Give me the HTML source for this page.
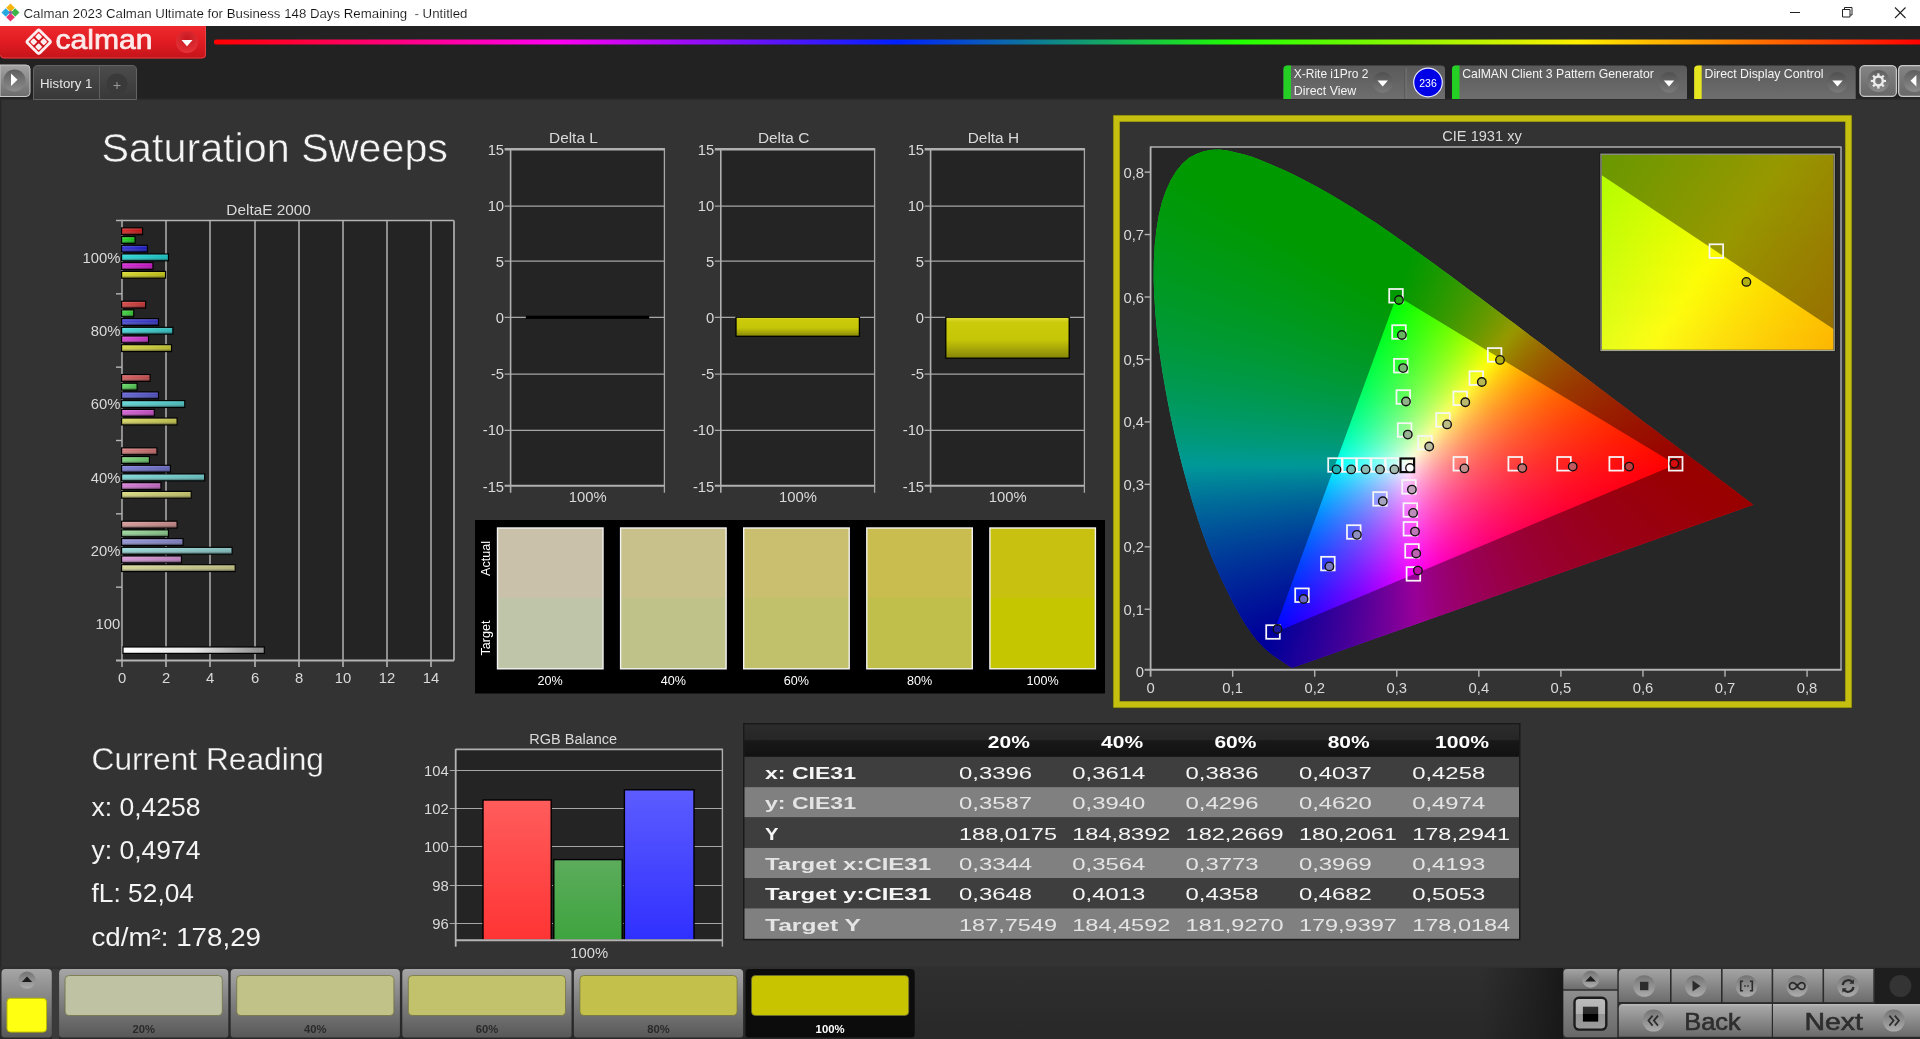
<!DOCTYPE html>
<html><head><meta charset="utf-8"><title>Calman 2023 - Saturation Sweeps</title>
<style>html,body{margin:0;padding:0;background:#333;overflow:hidden}svg{display:block;will-change:transform}text{font-family:"Liberation Sans",sans-serif;white-space:pre}</style>
</head><body>
<svg width="1920" height="1039" viewBox="0 0 1920 1039">
<defs><linearGradient id="rb" gradientUnits="userSpaceOnUse" x1="214" x2="1920" y1="0" y2="0"><stop offset="0" stop-color="#f00"/><stop offset="0.2" stop-color="#ff00f0"/><stop offset="0.4" stop-color="#0020ff"/><stop offset="0.6" stop-color="#20ff00"/><stop offset="0.8" stop-color="#ffee00"/><stop offset="1" stop-color="#f00"/></linearGradient><linearGradient id="redb" x1="0" x2="0" y1="0" y2="1"><stop offset="0" stop-color="#ee2a2e"/><stop offset="0.5" stop-color="#e01c22"/><stop offset="1" stop-color="#c4141a"/></linearGradient><radialGradient id="rdd" cx="0.5" cy="0.35" r="0.7"><stop offset="0" stop-color="#c81820"/><stop offset="1" stop-color="#e8343a"/></radialGradient><linearGradient id="pb" x1="0" x2="0" y1="0" y2="1"><stop offset="0" stop-color="#a4a4a4"/><stop offset="1" stop-color="#6c6c6c"/></linearGradient><linearGradient id="pc" x1="0" x2="0" y1="0" y2="1"><stop offset="0" stop-color="#5e5e5e"/><stop offset="1" stop-color="#8c8c8c"/></linearGradient><linearGradient id="ht" x1="0" x2="0" y1="0" y2="1"><stop offset="0" stop-color="#4c4c4c"/><stop offset="1" stop-color="#383838"/></linearGradient><linearGradient id="db" x1="0" x2="0" y1="0" y2="1"><stop offset="0" stop-color="#5a5a5a"/><stop offset="1" stop-color="#6e6e6e"/></linearGradient><linearGradient id="dc" x1="0" x2="0" y1="0" y2="1"><stop offset="0" stop-color="#505050"/><stop offset="1" stop-color="#7a7a7a"/></linearGradient><linearGradient id="gb" x1="0" x2="0" y1="0" y2="1"><stop offset="0" stop-color="#848484"/><stop offset="1" stop-color="#686868"/></linearGradient><linearGradient id="bh" x1="0" x2="0" y1="0" y2="1"><stop offset="0" stop-color="#fff" stop-opacity="0.22"/><stop offset="0.4" stop-color="#fff" stop-opacity="0"/><stop offset="1" stop-color="#000" stop-opacity="0.5"/></linearGradient><linearGradient id="bw" x1="0" x2="1" y1="0" y2="0"><stop offset="0" stop-color="#fff" stop-opacity="0.10"/><stop offset="1" stop-color="#000" stop-opacity="0.12"/></linearGradient><linearGradient id="wb" x1="0" x2="1" y1="0" y2="0"><stop offset="0" stop-color="#fff"/><stop offset="0.5" stop-color="#e8e8e8"/><stop offset="1" stop-color="#8c8c8c"/></linearGradient><linearGradient id="yb" x1="0" x2="0" y1="0" y2="1"><stop offset="0" stop-color="#e0e040"/><stop offset="0.12" stop-color="#cbcb0c"/><stop offset="0.55" stop-color="#c6c608"/><stop offset="1" stop-color="#86860a"/></linearGradient><linearGradient id="cf0" gradientUnits="userSpaceOnUse" x1="1150" x2="1760" y1="0" y2="0"><stop offset="0.2295" stop-color="#00ff00"/><stop offset="0.2443" stop-color="#00ff00"/></linearGradient><linearGradient id="cf1" gradientUnits="userSpaceOnUse" x1="1150" x2="1760" y1="0" y2="0"><stop offset="0.0670" stop-color="#00ff00"/><stop offset="0.1556" stop-color="#00ff00"/></linearGradient><linearGradient id="cf2" gradientUnits="userSpaceOnUse" x1="1150" x2="1760" y1="0" y2="0"><stop offset="0.0487" stop-color="#00ff00"/><stop offset="0.1864" stop-color="#00ff00"/></linearGradient><linearGradient id="cf3" gradientUnits="userSpaceOnUse" x1="1150" x2="1760" y1="0" y2="0"><stop offset="0.0381" stop-color="#00ff01"/><stop offset="0.2102" stop-color="#00ff00"/></linearGradient><linearGradient id="cf4" gradientUnits="userSpaceOnUse" x1="1150" x2="1760" y1="0" y2="0"><stop offset="0.0301" stop-color="#00ff05"/><stop offset="0.0646" stop-color="#00ff00"/><stop offset="0.2318" stop-color="#00ff00"/></linearGradient><linearGradient id="cf5" gradientUnits="userSpaceOnUse" x1="1150" x2="1760" y1="0" y2="0"><stop offset="0.0241" stop-color="#00ff07"/><stop offset="0.0831" stop-color="#00ff00"/><stop offset="0.2552" stop-color="#00ff00"/></linearGradient><linearGradient id="cf6" gradientUnits="userSpaceOnUse" x1="1150" x2="1760" y1="0" y2="0"><stop offset="0.0188" stop-color="#00ff0a"/><stop offset="0.0975" stop-color="#00ff00"/><stop offset="0.2746" stop-color="#00ff00"/></linearGradient><linearGradient id="cf7" gradientUnits="userSpaceOnUse" x1="1150" x2="1760" y1="0" y2="0"><stop offset="0.0142" stop-color="#00ff0d"/><stop offset="0.1126" stop-color="#00ff00"/><stop offset="0.2896" stop-color="#00ff00"/></linearGradient><linearGradient id="cf8" gradientUnits="userSpaceOnUse" x1="1150" x2="1760" y1="0" y2="0"><stop offset="0.0105" stop-color="#00ff10"/><stop offset="0.1286" stop-color="#00ff00"/><stop offset="0.3105" stop-color="#00ff00"/></linearGradient><linearGradient id="cf9" gradientUnits="userSpaceOnUse" x1="1150" x2="1760" y1="0" y2="0"><stop offset="0.0071" stop-color="#00ff13"/><stop offset="0.1448" stop-color="#00ff00"/><stop offset="0.3268" stop-color="#00ff00"/></linearGradient><linearGradient id="cf10" gradientUnits="userSpaceOnUse" x1="1150" x2="1760" y1="0" y2="0"><stop offset="0.0046" stop-color="#00ff16"/><stop offset="0.1619" stop-color="#00ff00"/><stop offset="0.3390" stop-color="#00ff00"/></linearGradient><linearGradient id="cf11" gradientUnits="userSpaceOnUse" x1="1150" x2="1760" y1="0" y2="0"><stop offset="0.0022" stop-color="#00ff18"/><stop offset="0.1792" stop-color="#00ff00"/><stop offset="0.3563" stop-color="#00ff00"/></linearGradient><linearGradient id="cf12" gradientUnits="userSpaceOnUse" x1="1150" x2="1760" y1="0" y2="0"><stop offset="0.0003" stop-color="#00ff1b"/><stop offset="0.1970" stop-color="#00ff00"/><stop offset="0.3691" stop-color="#00ff00"/></linearGradient><linearGradient id="cf13" gradientUnits="userSpaceOnUse" x1="1150" x2="1760" y1="0" y2="0"><stop offset="-0.0014" stop-color="#00ff1e"/><stop offset="0.2101" stop-color="#00ff00"/><stop offset="0.3872" stop-color="#00ff00"/></linearGradient><linearGradient id="cf14" gradientUnits="userSpaceOnUse" x1="1150" x2="1760" y1="0" y2="0"><stop offset="-0.0029" stop-color="#00ff21"/><stop offset="0.2283" stop-color="#00ff00"/><stop offset="0.4004" stop-color="#00ff00"/></linearGradient><linearGradient id="cf15" gradientUnits="userSpaceOnUse" x1="1150" x2="1760" y1="0" y2="0"><stop offset="-0.0039" stop-color="#00ff24"/><stop offset="0.2469" stop-color="#00ff00"/><stop offset="0.4141" stop-color="#00ff00"/></linearGradient><linearGradient id="cf16" gradientUnits="userSpaceOnUse" x1="1150" x2="1760" y1="0" y2="0"><stop offset="-0.0050" stop-color="#00ff27"/><stop offset="0.2606" stop-color="#00ff00"/><stop offset="0.4278" stop-color="#00ff00"/></linearGradient><linearGradient id="cf17" gradientUnits="userSpaceOnUse" x1="1150" x2="1760" y1="0" y2="0"><stop offset="-0.0057" stop-color="#00ff2a"/><stop offset="0.2795" stop-color="#00ff00"/><stop offset="0.4320" stop-color="#00ff00"/><stop offset="0.4418" stop-color="#07ff00"/></linearGradient><linearGradient id="cf18" gradientUnits="userSpaceOnUse" x1="1150" x2="1760" y1="0" y2="0"><stop offset="-0.0063" stop-color="#00ff2d"/><stop offset="0.1511" stop-color="#00ff18"/><stop offset="0.2937" stop-color="#00ff00"/><stop offset="0.4265" stop-color="#00ff00"/><stop offset="0.4560" stop-color="#15ff00"/></linearGradient><linearGradient id="cf19" gradientUnits="userSpaceOnUse" x1="1150" x2="1760" y1="0" y2="0"><stop offset="-0.0068" stop-color="#00ff30"/><stop offset="0.1653" stop-color="#00ff19"/><stop offset="0.3079" stop-color="#00ff00"/><stop offset="0.4260" stop-color="#00ff00"/><stop offset="0.4702" stop-color="#24ff00"/></linearGradient><linearGradient id="cf20" gradientUnits="userSpaceOnUse" x1="1150" x2="1760" y1="0" y2="0"><stop offset="-0.0070" stop-color="#00ff33"/><stop offset="0.1258" stop-color="#00ff22"/><stop offset="0.3275" stop-color="#00ff00"/><stop offset="0.4209" stop-color="#00ff00"/><stop offset="0.4848" stop-color="#34ff00"/></linearGradient><linearGradient id="cf21" gradientUnits="userSpaceOnUse" x1="1150" x2="1760" y1="0" y2="0"><stop offset="-0.0071" stop-color="#00ff37"/><stop offset="0.1749" stop-color="#00ff1e"/><stop offset="0.3421" stop-color="#00ff00"/><stop offset="0.4159" stop-color="#00ff00"/><stop offset="0.4602" stop-color="#22ff00"/><stop offset="0.4946" stop-color="#41ff00"/></linearGradient><linearGradient id="cf22" gradientUnits="userSpaceOnUse" x1="1150" x2="1760" y1="0" y2="0"><stop offset="-0.0071" stop-color="#00ff3a"/><stop offset="0.1896" stop-color="#00ff1f"/><stop offset="0.3568" stop-color="#00ff00"/><stop offset="0.4109" stop-color="#00ff00"/><stop offset="0.4158" stop-color="#01ff00"/><stop offset="0.4453" stop-color="#19ff00"/><stop offset="0.5093" stop-color="#53ff00"/></linearGradient><linearGradient id="cf23" gradientUnits="userSpaceOnUse" x1="1150" x2="1760" y1="0" y2="0"><stop offset="-0.0068" stop-color="#00ff3d"/><stop offset="0.1998" stop-color="#00ff21"/><stop offset="0.3768" stop-color="#00ff00"/><stop offset="0.4113" stop-color="#00ff00"/><stop offset="0.4604" stop-color="#2aff00"/><stop offset="0.5244" stop-color="#67ff00"/></linearGradient><linearGradient id="cf24" gradientUnits="userSpaceOnUse" x1="1150" x2="1760" y1="0" y2="0"><stop offset="-0.0064" stop-color="#00ff41"/><stop offset="0.1657" stop-color="#00ff2a"/><stop offset="0.3919" stop-color="#00ff00"/><stop offset="0.4067" stop-color="#00ff00"/><stop offset="0.4755" stop-color="#3cff00"/><stop offset="0.5345" stop-color="#77ff00"/></linearGradient><linearGradient id="cf25" gradientUnits="userSpaceOnUse" x1="1150" x2="1760" y1="0" y2="0"><stop offset="-0.0061" stop-color="#00ff45"/><stop offset="0.2201" stop-color="#00ff25"/><stop offset="0.4021" stop-color="#00ff01"/><stop offset="0.4759" stop-color="#41ff00"/><stop offset="0.5496" stop-color="#8eff00"/></linearGradient><linearGradient id="cf26" gradientUnits="userSpaceOnUse" x1="1150" x2="1760" y1="0" y2="0"><stop offset="-0.0054" stop-color="#00ff48"/><stop offset="0.2257" stop-color="#00ff28"/><stop offset="0.3979" stop-color="#00ff06"/><stop offset="0.4224" stop-color="#14ff00"/><stop offset="0.4618" stop-color="#38ff00"/><stop offset="0.5257" stop-color="#7aff00"/><stop offset="0.5651" stop-color="#a8ff00"/></linearGradient><linearGradient id="cf27" gradientUnits="userSpaceOnUse" x1="1150" x2="1760" y1="0" y2="0"><stop offset="-0.0048" stop-color="#00ff4c"/><stop offset="0.2018" stop-color="#00ff30"/><stop offset="0.3936" stop-color="#00ff0b"/><stop offset="0.4084" stop-color="#0aff08"/><stop offset="0.4428" stop-color="#2aff00"/><stop offset="0.4969" stop-color="#61ff00"/><stop offset="0.5756" stop-color="#bdff00"/></linearGradient><linearGradient id="cf28" gradientUnits="userSpaceOnUse" x1="1150" x2="1760" y1="0" y2="0"><stop offset="-0.0041" stop-color="#00ff50"/><stop offset="0.2271" stop-color="#00ff30"/><stop offset="0.3943" stop-color="#01ff0f"/><stop offset="0.4582" stop-color="#3eff00"/><stop offset="0.5025" stop-color="#6dff00"/><stop offset="0.5566" stop-color="#adff00"/><stop offset="0.5910" stop-color="#daff00"/></linearGradient><linearGradient id="cf29" gradientUnits="userSpaceOnUse" x1="1150" x2="1760" y1="0" y2="0"><stop offset="-0.0032" stop-color="#00ff54"/><stop offset="0.1985" stop-color="#00ff39"/><stop offset="0.3903" stop-color="#01ff14"/><stop offset="0.4739" stop-color="#54ff00"/><stop offset="0.4985" stop-color="#6fff00"/><stop offset="0.5427" stop-color="#a4ff00"/><stop offset="0.6018" stop-color="#f4ff00"/></linearGradient><linearGradient id="cf30" gradientUnits="userSpaceOnUse" x1="1150" x2="1760" y1="0" y2="0"><stop offset="-0.0022" stop-color="#00ff59"/><stop offset="0.1896" stop-color="#00ff3f"/><stop offset="0.3863" stop-color="#00ff1a"/><stop offset="0.4551" stop-color="#45ff09"/><stop offset="0.4945" stop-color="#71ff00"/><stop offset="0.5338" stop-color="#a1ff00"/><stop offset="0.5978" stop-color="#f9ff00"/><stop offset="0.6027" stop-color="#fffd00"/><stop offset="0.6174" stop-color="#ffe900"/></linearGradient><linearGradient id="cf31" gradientUnits="userSpaceOnUse" x1="1150" x2="1760" y1="0" y2="0"><stop offset="-0.0013" stop-color="#00ff5d"/><stop offset="0.2003" stop-color="#00ff42"/><stop offset="0.3823" stop-color="#00ff1f"/><stop offset="0.4364" stop-color="#36ff13"/><stop offset="0.4905" stop-color="#73ff04"/><stop offset="0.5053" stop-color="#85ff00"/><stop offset="0.5446" stop-color="#b8ff00"/><stop offset="0.5938" stop-color="#ffff00"/><stop offset="0.6282" stop-color="#ffd100"/></linearGradient><linearGradient id="cf32" gradientUnits="userSpaceOnUse" x1="1150" x2="1760" y1="0" y2="0"><stop offset="-0.0001" stop-color="#00ff61"/><stop offset="0.2064" stop-color="#00ff46"/><stop offset="0.3785" stop-color="#00ff25"/><stop offset="0.4326" stop-color="#37ff18"/><stop offset="0.5064" stop-color="#8eff05"/><stop offset="0.5212" stop-color="#a2ff00"/><stop offset="0.5851" stop-color="#feff00"/><stop offset="0.6146" stop-color="#ffd700"/><stop offset="0.6392" stop-color="#ffbd00"/></linearGradient><linearGradient id="cf33" gradientUnits="userSpaceOnUse" x1="1150" x2="1760" y1="0" y2="0"><stop offset="0.0011" stop-color="#00ff66"/><stop offset="0.1879" stop-color="#00ff4e"/><stop offset="0.3748" stop-color="#00ff2b"/><stop offset="0.4289" stop-color="#38ff1f"/><stop offset="0.4830" stop-color="#78ff10"/><stop offset="0.5371" stop-color="#c1ff00"/><stop offset="0.5765" stop-color="#fdff00"/><stop offset="0.6158" stop-color="#ffcc00"/><stop offset="0.6552" stop-color="#ffa600"/></linearGradient><linearGradient id="cf34" gradientUnits="userSpaceOnUse" x1="1150" x2="1760" y1="0" y2="0"><stop offset="0.0023" stop-color="#00ff6b"/><stop offset="0.2088" stop-color="#00ff50"/><stop offset="0.3711" stop-color="#00ff32"/><stop offset="0.4006" stop-color="#1eff2b"/><stop offset="0.4646" stop-color="#68ff1b"/><stop offset="0.4990" stop-color="#95ff11"/><stop offset="0.5531" stop-color="#e4ff00"/><stop offset="0.5678" stop-color="#fbff00"/><stop offset="0.5728" stop-color="#fffb00"/><stop offset="0.5924" stop-color="#ffde00"/><stop offset="0.6170" stop-color="#ffc100"/><stop offset="0.6662" stop-color="#ff9500"/></linearGradient><linearGradient id="cf35" gradientUnits="userSpaceOnUse" x1="1150" x2="1760" y1="0" y2="0"><stop offset="0.0036" stop-color="#00ff70"/><stop offset="0.2249" stop-color="#00ff53"/><stop offset="0.3676" stop-color="#00ff38"/><stop offset="0.4168" stop-color="#35ff2d"/><stop offset="0.4659" stop-color="#71ff20"/><stop offset="0.5200" stop-color="#bcff11"/><stop offset="0.5594" stop-color="#faff04"/><stop offset="0.5643" stop-color="#fffc02"/><stop offset="0.5790" stop-color="#ffe500"/><stop offset="0.6036" stop-color="#ffc600"/><stop offset="0.6381" stop-color="#ffa400"/><stop offset="0.6823" stop-color="#ff8300"/></linearGradient><linearGradient id="cf36" gradientUnits="userSpaceOnUse" x1="1150" x2="1760" y1="0" y2="0"><stop offset="0.0051" stop-color="#00ff75"/><stop offset="0.1920" stop-color="#00ff5e"/><stop offset="0.3641" stop-color="#00ff3f"/><stop offset="0.4232" stop-color="#42ff31"/><stop offset="0.4625" stop-color="#74ff27"/><stop offset="0.4969" stop-color="#a4ff1e"/><stop offset="0.5559" stop-color="#fffd0b"/><stop offset="0.5854" stop-color="#ffd200"/><stop offset="0.6199" stop-color="#ffac00"/><stop offset="0.6494" stop-color="#ff9300"/><stop offset="0.6936" stop-color="#ff7600"/></linearGradient><linearGradient id="cf37" gradientUnits="userSpaceOnUse" x1="1150" x2="1760" y1="0" y2="0"><stop offset="0.0066" stop-color="#00ff7b"/><stop offset="0.1787" stop-color="#00ff66"/><stop offset="0.3607" stop-color="#00ff46"/><stop offset="0.4000" stop-color="#2cff3d"/><stop offset="0.4640" stop-color="#7eff2e"/><stop offset="0.4984" stop-color="#b0ff24"/><stop offset="0.5476" stop-color="#fffe14"/><stop offset="0.5820" stop-color="#ffcb06"/><stop offset="0.6115" stop-color="#ffab00"/><stop offset="0.6558" stop-color="#ff8700"/><stop offset="0.7050" stop-color="#ff6a00"/></linearGradient><linearGradient id="cf38" gradientUnits="userSpaceOnUse" x1="1150" x2="1760" y1="0" y2="0"><stop offset="0.0081" stop-color="#00ff80"/><stop offset="0.1803" stop-color="#00ff6c"/><stop offset="0.3573" stop-color="#00ff4e"/><stop offset="0.4163" stop-color="#46ff41"/><stop offset="0.4458" stop-color="#6dff39"/><stop offset="0.4999" stop-color="#bdff2a"/><stop offset="0.5393" stop-color="#fffe1e"/><stop offset="0.5688" stop-color="#ffd110"/><stop offset="0.6131" stop-color="#ffa102"/><stop offset="0.6573" stop-color="#ff7f00"/><stop offset="0.7213" stop-color="#ff5d00"/></linearGradient><linearGradient id="cf39" gradientUnits="userSpaceOnUse" x1="1150" x2="1760" y1="0" y2="0"><stop offset="0.0098" stop-color="#00ff86"/><stop offset="0.1918" stop-color="#00ff71"/><stop offset="0.3541" stop-color="#01ff55"/><stop offset="0.4082" stop-color="#42ff4a"/><stop offset="0.4623" stop-color="#8dff3c"/><stop offset="0.4967" stop-color="#c3ff33"/><stop offset="0.5312" stop-color="#ffff28"/><stop offset="0.5656" stop-color="#ffca17"/><stop offset="0.6098" stop-color="#ff9b07"/><stop offset="0.6344" stop-color="#ff8800"/><stop offset="0.6689" stop-color="#ff7100"/><stop offset="0.7328" stop-color="#ff5300"/></linearGradient><linearGradient id="cf40" gradientUnits="userSpaceOnUse" x1="1150" x2="1760" y1="0" y2="0"><stop offset="0.0116" stop-color="#00ff8c"/><stop offset="0.2132" stop-color="#00ff75"/><stop offset="0.3509" stop-color="#01ff5d"/><stop offset="0.3952" stop-color="#37ff54"/><stop offset="0.4394" stop-color="#74ff4a"/><stop offset="0.4837" stop-color="#b9ff3e"/><stop offset="0.5230" stop-color="#ffff33"/><stop offset="0.5427" stop-color="#ffde27"/><stop offset="0.5624" stop-color="#ffc31d"/><stop offset="0.6017" stop-color="#ff9a0e"/><stop offset="0.6509" stop-color="#ff7600"/><stop offset="0.7001" stop-color="#ff5b00"/><stop offset="0.7443" stop-color="#ff4900"/></linearGradient><linearGradient id="cf41" gradientUnits="userSpaceOnUse" x1="1150" x2="1760" y1="0" y2="0"><stop offset="0.0133" stop-color="#00ff93"/><stop offset="0.1706" stop-color="#00ff82"/><stop offset="0.3477" stop-color="#02ff66"/><stop offset="0.3919" stop-color="#39ff5d"/><stop offset="0.4362" stop-color="#78ff53"/><stop offset="0.4756" stop-color="#b7ff49"/><stop offset="0.5149" stop-color="#feff3e"/><stop offset="0.5346" stop-color="#ffde30"/><stop offset="0.5592" stop-color="#ffbc23"/><stop offset="0.5887" stop-color="#ff9d16"/><stop offset="0.6133" stop-color="#ff880e"/><stop offset="0.6674" stop-color="#ff6600"/><stop offset="0.6969" stop-color="#ff5700"/><stop offset="0.7559" stop-color="#ff4100"/></linearGradient><linearGradient id="cf42" gradientUnits="userSpaceOnUse" x1="1150" x2="1760" y1="0" y2="0"><stop offset="0.0151" stop-color="#00ff99"/><stop offset="0.1824" stop-color="#00ff88"/><stop offset="0.3446" stop-color="#02ff6f"/><stop offset="0.3791" stop-color="#2eff68"/><stop offset="0.4233" stop-color="#6dff5f"/><stop offset="0.4774" stop-color="#c6ff52"/><stop offset="0.5069" stop-color="#feff49"/><stop offset="0.5315" stop-color="#ffd637"/><stop offset="0.5512" stop-color="#ffbb2c"/><stop offset="0.6004" stop-color="#ff8a16"/><stop offset="0.6545" stop-color="#ff6607"/><stop offset="0.6840" stop-color="#ff5800"/><stop offset="0.7725" stop-color="#ff3700"/></linearGradient><linearGradient id="cf43" gradientUnits="userSpaceOnUse" x1="1150" x2="1760" y1="0" y2="0"><stop offset="0.0170" stop-color="#00ffa0"/><stop offset="0.1744" stop-color="#00ff91"/><stop offset="0.3367" stop-color="#00ff79"/><stop offset="0.3416" stop-color="#03ff79"/><stop offset="0.3613" stop-color="#1cff75"/><stop offset="0.4105" stop-color="#62ff6b"/><stop offset="0.4547" stop-color="#aaff61"/><stop offset="0.4990" stop-color="#fdff56"/><stop offset="0.5236" stop-color="#ffd542"/><stop offset="0.5531" stop-color="#ffae2f"/><stop offset="0.5777" stop-color="#ff9523"/><stop offset="0.6072" stop-color="#ff7d18"/><stop offset="0.6465" stop-color="#ff640c"/><stop offset="0.7006" stop-color="#ff4b00"/><stop offset="0.7842" stop-color="#ff3000"/></linearGradient><linearGradient id="cf44" gradientUnits="userSpaceOnUse" x1="1150" x2="1760" y1="0" y2="0"><stop offset="0.0189" stop-color="#00ffa8"/><stop offset="0.2206" stop-color="#00ff94"/><stop offset="0.3337" stop-color="#00ff83"/><stop offset="0.3533" stop-color="#17ff80"/><stop offset="0.4074" stop-color="#66ff76"/><stop offset="0.4419" stop-color="#9fff6f"/><stop offset="0.4911" stop-color="#fdff62"/><stop offset="0.5206" stop-color="#ffcd49"/><stop offset="0.5501" stop-color="#ffa735"/><stop offset="0.5697" stop-color="#ff932b"/><stop offset="0.6091" stop-color="#ff741b"/><stop offset="0.6681" stop-color="#ff530a"/><stop offset="0.7173" stop-color="#ff4000"/><stop offset="0.7960" stop-color="#ff2900"/></linearGradient><linearGradient id="cf45" gradientUnits="userSpaceOnUse" x1="1150" x2="1760" y1="0" y2="0"><stop offset="0.0210" stop-color="#00ffaf"/><stop offset="0.2128" stop-color="#00ff9e"/><stop offset="0.3308" stop-color="#00ff8e"/><stop offset="0.3751" stop-color="#3cff87"/><stop offset="0.4193" stop-color="#83ff7e"/><stop offset="0.4488" stop-color="#b8ff78"/><stop offset="0.4833" stop-color="#fdff70"/><stop offset="0.5078" stop-color="#ffd358"/><stop offset="0.5374" stop-color="#ffab41"/><stop offset="0.5619" stop-color="#ff9133"/><stop offset="0.6013" stop-color="#ff7221"/><stop offset="0.6456" stop-color="#ff5813"/><stop offset="0.7193" stop-color="#ff3a02"/><stop offset="0.8078" stop-color="#ff2300"/></linearGradient><linearGradient id="cf46" gradientUnits="userSpaceOnUse" x1="1150" x2="1760" y1="0" y2="0"><stop offset="0.0231" stop-color="#00ffb7"/><stop offset="0.1903" stop-color="#00ffaa"/><stop offset="0.3280" stop-color="#00ff99"/><stop offset="0.3723" stop-color="#3fff92"/><stop offset="0.4018" stop-color="#6fff8d"/><stop offset="0.4411" stop-color="#b6ff86"/><stop offset="0.4755" stop-color="#fdff7e"/><stop offset="0.5050" stop-color="#ffca5f"/><stop offset="0.5296" stop-color="#ffa94b"/><stop offset="0.5641" stop-color="#ff8636"/><stop offset="0.6034" stop-color="#ff6924"/><stop offset="0.6723" stop-color="#ff460f"/><stop offset="0.7411" stop-color="#ff2f01"/><stop offset="0.8247" stop-color="#ff1c00"/></linearGradient><linearGradient id="cf47" gradientUnits="userSpaceOnUse" x1="1150" x2="1760" y1="0" y2="0"><stop offset="0.0252" stop-color="#00ffc0"/><stop offset="0.1776" stop-color="#00ffb5"/><stop offset="0.3252" stop-color="#00ffa5"/><stop offset="0.3596" stop-color="#33ffa0"/><stop offset="0.3989" stop-color="#74ff9a"/><stop offset="0.4383" stop-color="#beff93"/><stop offset="0.4678" stop-color="#fdff8d"/><stop offset="0.4875" stop-color="#ffd975"/><stop offset="0.5170" stop-color="#ffad58"/><stop offset="0.5465" stop-color="#ff8d44"/><stop offset="0.5858" stop-color="#ff6d2f"/><stop offset="0.6350" stop-color="#ff511d"/><stop offset="0.6793" stop-color="#ff3e11"/><stop offset="0.7629" stop-color="#ff2500"/><stop offset="0.8367" stop-color="#ff1600"/></linearGradient><linearGradient id="cf48" gradientUnits="userSpaceOnUse" x1="1150" x2="1760" y1="0" y2="0"><stop offset="0.0274" stop-color="#00ffc9"/><stop offset="0.1848" stop-color="#00ffbf"/><stop offset="0.3225" stop-color="#02ffb1"/><stop offset="0.3520" stop-color="#2effae"/><stop offset="0.3864" stop-color="#68ffa9"/><stop offset="0.4159" stop-color="#9fffa5"/><stop offset="0.4602" stop-color="#feff9d"/><stop offset="0.4848" stop-color="#ffcf7c"/><stop offset="0.5192" stop-color="#ff9f5b"/><stop offset="0.5438" stop-color="#ff8649"/><stop offset="0.5881" stop-color="#ff6432"/><stop offset="0.6323" stop-color="#ff4c21"/><stop offset="0.7208" stop-color="#ff2c0a"/><stop offset="0.7799" stop-color="#ff1e00"/><stop offset="0.8487" stop-color="#ff1100"/></linearGradient><linearGradient id="cf49" gradientUnits="userSpaceOnUse" x1="1150" x2="1760" y1="0" y2="0"><stop offset="0.0297" stop-color="#00ffd2"/><stop offset="0.3150" stop-color="#00ffbf"/><stop offset="0.3199" stop-color="#03ffbf"/><stop offset="0.3297" stop-color="#12ffbe"/><stop offset="0.3642" stop-color="#4affba"/><stop offset="0.3937" stop-color="#80ffb7"/><stop offset="0.4183" stop-color="#b1ffb3"/><stop offset="0.4527" stop-color="#feffae"/><stop offset="0.4822" stop-color="#ffc583"/><stop offset="0.5166" stop-color="#ff9761"/><stop offset="0.5609" stop-color="#ff6f43"/><stop offset="0.6002" stop-color="#ff5630"/><stop offset="0.6789" stop-color="#ff3417"/><stop offset="0.7576" stop-color="#ff1f06"/><stop offset="0.7970" stop-color="#ff1700"/><stop offset="0.8609" stop-color="#ff0c00"/></linearGradient><linearGradient id="cf50" gradientUnits="userSpaceOnUse" x1="1150" x2="1760" y1="0" y2="0"><stop offset="0.0321" stop-color="#00ffdc"/><stop offset="0.3124" stop-color="#00ffcd"/><stop offset="0.3370" stop-color="#24ffcb"/><stop offset="0.3763" stop-color="#6affc8"/><stop offset="0.4157" stop-color="#baffc4"/><stop offset="0.4452" stop-color="#ffffc0"/><stop offset="0.4550" stop-color="#ffe8ae"/><stop offset="0.4747" stop-color="#ffc391"/><stop offset="0.5042" stop-color="#ff9a6f"/><stop offset="0.5239" stop-color="#ff855f"/><stop offset="0.5534" stop-color="#ff6c4b"/><stop offset="0.5927" stop-color="#ff5336"/><stop offset="0.6616" stop-color="#ff351e"/><stop offset="0.7599" stop-color="#ff1a08"/><stop offset="0.8140" stop-color="#ff1000"/><stop offset="0.8731" stop-color="#ff0700"/></linearGradient><linearGradient id="cf51" gradientUnits="userSpaceOnUse" x1="1150" x2="1760" y1="0" y2="0"><stop offset="0.0345" stop-color="#00ffe7"/><stop offset="0.3099" stop-color="#00ffdd"/><stop offset="0.3394" stop-color="#30ffdb"/><stop offset="0.3738" stop-color="#70ffd9"/><stop offset="0.3984" stop-color="#a3ffd7"/><stop offset="0.4378" stop-color="#fffed3"/><stop offset="0.4525" stop-color="#ffdcb6"/><stop offset="0.4673" stop-color="#ffc19e"/><stop offset="0.5017" stop-color="#ff9276"/><stop offset="0.5410" stop-color="#ff6d56"/><stop offset="0.5804" stop-color="#ff533f"/><stop offset="0.6492" stop-color="#ff3425"/><stop offset="0.6935" stop-color="#ff2618"/><stop offset="0.8214" stop-color="#ff0c01"/><stop offset="0.8902" stop-color="#ff0200"/></linearGradient><linearGradient id="cf52" gradientUnits="userSpaceOnUse" x1="1150" x2="1760" y1="0" y2="0"><stop offset="0.0370" stop-color="#00fff2"/><stop offset="0.3075" stop-color="#01ffed"/><stop offset="0.3468" stop-color="#46ffec"/><stop offset="0.3764" stop-color="#81ffeb"/><stop offset="0.4009" stop-color="#b8ffea"/><stop offset="0.4255" stop-color="#f5ffe9"/><stop offset="0.4304" stop-color="#fffce6"/><stop offset="0.4452" stop-color="#ffdac6"/><stop offset="0.4649" stop-color="#ffb6a5"/><stop offset="0.4993" stop-color="#ff897b"/><stop offset="0.5386" stop-color="#ff665b"/><stop offset="0.5878" stop-color="#ff483f"/><stop offset="0.6370" stop-color="#ff332b"/><stop offset="0.6911" stop-color="#ff221c"/><stop offset="0.7698" stop-color="#ff110b"/><stop offset="0.8436" stop-color="#ff0500"/><stop offset="0.9026" stop-color="#ff0000"/></linearGradient><linearGradient id="cf53" gradientUnits="userSpaceOnUse" x1="1150" x2="1760" y1="0" y2="0"><stop offset="0.0395" stop-color="#00fffe"/><stop offset="0.3002" stop-color="#00fffe"/><stop offset="0.3051" stop-color="#03fffe"/><stop offset="0.3346" stop-color="#38fffe"/><stop offset="0.3592" stop-color="#69ffff"/><stop offset="0.3887" stop-color="#abffff"/><stop offset="0.4182" stop-color="#f6ffff"/><stop offset="0.4231" stop-color="#fffbfb"/><stop offset="0.4379" stop-color="#ffd8d8"/><stop offset="0.4526" stop-color="#ffbcbc"/><stop offset="0.4822" stop-color="#ff9192"/><stop offset="0.5018" stop-color="#ff7c7c"/><stop offset="0.5313" stop-color="#ff6363"/><stop offset="0.5707" stop-color="#ff4a4b"/><stop offset="0.6395" stop-color="#ff2d2d"/><stop offset="0.7231" stop-color="#ff1617"/><stop offset="0.8559" stop-color="#ff0001"/><stop offset="0.9149" stop-color="#ff0000"/></linearGradient><linearGradient id="cf54" gradientUnits="userSpaceOnUse" x1="1150" x2="1760" y1="0" y2="0"><stop offset="0.0421" stop-color="#00f4ff"/><stop offset="0.2978" stop-color="#00eeff"/><stop offset="0.3175" stop-color="#1eedff"/><stop offset="0.3519" stop-color="#5eecff"/><stop offset="0.3864" stop-color="#a7ebff"/><stop offset="0.4208" stop-color="#fbe9ff"/><stop offset="0.4257" stop-color="#ffe1f6"/><stop offset="0.4355" stop-color="#ffcbdf"/><stop offset="0.4552" stop-color="#ffa9ba"/><stop offset="0.4700" stop-color="#ff94a4"/><stop offset="0.4896" stop-color="#ff7e8c"/><stop offset="0.5290" stop-color="#ff5c68"/><stop offset="0.5831" stop-color="#ff3e47"/><stop offset="0.6175" stop-color="#ff2f38"/><stop offset="0.6815" stop-color="#ff1c23"/><stop offset="0.7601" stop-color="#ff0b12"/><stop offset="0.8339" stop-color="#ff0006"/><stop offset="0.8782" stop-color="#ff0000"/><stop offset="0.9274" stop-color="#ff0000"/></linearGradient><linearGradient id="cf55" gradientUnits="userSpaceOnUse" x1="1150" x2="1760" y1="0" y2="0"><stop offset="0.0448" stop-color="#00e8ff"/><stop offset="0.2956" stop-color="#00deff"/><stop offset="0.3251" stop-color="#30dcff"/><stop offset="0.3645" stop-color="#7ad9ff"/><stop offset="0.4038" stop-color="#d0d6ff"/><stop offset="0.4235" stop-color="#ffd3fd"/><stop offset="0.4481" stop-color="#ffa5c9"/><stop offset="0.4677" stop-color="#ff8baa"/><stop offset="0.4923" stop-color="#ff718c"/><stop offset="0.5169" stop-color="#ff5c75"/><stop offset="0.5464" stop-color="#ff495f"/><stop offset="0.5956" stop-color="#ff3244"/><stop offset="0.6989" stop-color="#ff1321"/><stop offset="0.8022" stop-color="#ff010d"/><stop offset="0.8956" stop-color="#ff0000"/><stop offset="0.9399" stop-color="#ff0000"/></linearGradient><linearGradient id="cf56" gradientUnits="userSpaceOnUse" x1="1150" x2="1760" y1="0" y2="0"><stop offset="0.0475" stop-color="#00ddff"/><stop offset="0.2934" stop-color="#01ceff"/><stop offset="0.3278" stop-color="#39cbff"/><stop offset="0.3573" stop-color="#6fc8ff"/><stop offset="0.3967" stop-color="#c0c4ff"/><stop offset="0.4212" stop-color="#fac1ff"/><stop offset="0.4262" stop-color="#ffbbf8"/><stop offset="0.4508" stop-color="#ff93c7"/><stop offset="0.4852" stop-color="#ff6d97"/><stop offset="0.5294" stop-color="#ff4c6e"/><stop offset="0.5934" stop-color="#ff2d48"/><stop offset="0.6819" stop-color="#ff1328"/><stop offset="0.7803" stop-color="#ff0112"/><stop offset="0.9081" stop-color="#ff0000"/><stop offset="0.9524" stop-color="#ff0000"/></linearGradient><linearGradient id="cf57" gradientUnits="userSpaceOnUse" x1="1150" x2="1760" y1="0" y2="0"><stop offset="0.0502" stop-color="#00d2ff"/><stop offset="0.2863" stop-color="#00c0ff"/><stop offset="0.2912" stop-color="#03c0ff"/><stop offset="0.3306" stop-color="#42bbff"/><stop offset="0.3601" stop-color="#77b8ff"/><stop offset="0.3945" stop-color="#bcb3ff"/><stop offset="0.4240" stop-color="#ffaeff"/><stop offset="0.4486" stop-color="#ff89cd"/><stop offset="0.4683" stop-color="#ff72af"/><stop offset="0.4879" stop-color="#ff6097"/><stop offset="0.5076" stop-color="#ff5183"/><stop offset="0.5420" stop-color="#ff3d68"/><stop offset="0.6060" stop-color="#ff2345"/><stop offset="0.6797" stop-color="#ff0f2b"/><stop offset="0.7634" stop-color="#ff0018"/><stop offset="0.8814" stop-color="#ff0005"/><stop offset="0.9650" stop-color="#ff0000"/></linearGradient><linearGradient id="cf58" gradientUnits="userSpaceOnUse" x1="1150" x2="1760" y1="0" y2="0"><stop offset="0.0531" stop-color="#00c7ff"/><stop offset="0.2843" stop-color="#00b2ff"/><stop offset="0.3089" stop-color="#23afff"/><stop offset="0.3482" stop-color="#64aaff"/><stop offset="0.3777" stop-color="#9ba5ff"/><stop offset="0.4220" stop-color="#f99eff"/><stop offset="0.4269" stop-color="#ff9afa"/><stop offset="0.4367" stop-color="#ff8be5"/><stop offset="0.4564" stop-color="#ff73c3"/><stop offset="0.4859" stop-color="#ff589c"/><stop offset="0.5252" stop-color="#ff3e77"/><stop offset="0.5744" stop-color="#ff2857"/><stop offset="0.5990" stop-color="#ff204b"/><stop offset="0.6679" stop-color="#ff0d31"/><stop offset="0.7416" stop-color="#ff001e"/><stop offset="0.8646" stop-color="#ff0009"/><stop offset="0.9433" stop-color="#ff0000"/><stop offset="0.9777" stop-color="#ff0000"/></linearGradient><linearGradient id="cf59" gradientUnits="userSpaceOnUse" x1="1150" x2="1760" y1="0" y2="0"><stop offset="0.0560" stop-color="#00bcff"/><stop offset="0.2822" stop-color="#01a6ff"/><stop offset="0.3216" stop-color="#3ba0ff"/><stop offset="0.3658" stop-color="#8699ff"/><stop offset="0.3904" stop-color="#b594ff"/><stop offset="0.4248" stop-color="#fe8dff"/><stop offset="0.4543" stop-color="#ff6ac8"/><stop offset="0.4839" stop-color="#ff50a1"/><stop offset="0.5084" stop-color="#ff4088"/><stop offset="0.5429" stop-color="#ff2e6d"/><stop offset="0.6068" stop-color="#ff184a"/><stop offset="0.6757" stop-color="#ff0831"/><stop offset="0.7199" stop-color="#ff0026"/><stop offset="0.8429" stop-color="#ff000e"/><stop offset="0.9609" stop-color="#ff0000"/><stop offset="0.9904" stop-color="#ff0000"/></linearGradient><linearGradient id="cf60" gradientUnits="userSpaceOnUse" x1="1150" x2="1760" y1="0" y2="0"><stop offset="0.0590" stop-color="#00b2ff"/><stop offset="0.2754" stop-color="#009aff"/><stop offset="0.2803" stop-color="#0399ff"/><stop offset="0.3443" stop-color="#638fff"/><stop offset="0.3836" stop-color="#a987ff"/><stop offset="0.4230" stop-color="#f97fff"/><stop offset="0.4279" stop-color="#ff7bfb"/><stop offset="0.4574" stop-color="#ff5cc6"/><stop offset="0.4869" stop-color="#ff45a0"/><stop offset="0.5017" stop-color="#ff3c91"/><stop offset="0.5410" stop-color="#ff2971"/><stop offset="0.5951" stop-color="#ff1652"/><stop offset="0.6492" stop-color="#ff093c"/><stop offset="0.6935" stop-color="#ff002f"/><stop offset="0.7476" stop-color="#ff0021"/><stop offset="0.8558" stop-color="#ff000e"/><stop offset="0.9885" stop-color="#ff0000"/></linearGradient><linearGradient id="cf61" gradientUnits="userSpaceOnUse" x1="1150" x2="1760" y1="0" y2="0"><stop offset="0.0621" stop-color="#00a8ff"/><stop offset="0.1802" stop-color="#009cff"/><stop offset="0.2736" stop-color="#008eff"/><stop offset="0.3080" stop-color="#2e89ff"/><stop offset="0.3523" stop-color="#7380ff"/><stop offset="0.3916" stop-color="#b978ff"/><stop offset="0.4261" stop-color="#fe70ff"/><stop offset="0.4408" stop-color="#ff60e3"/><stop offset="0.4654" stop-color="#ff4bbd"/><stop offset="0.5048" stop-color="#ff3291"/><stop offset="0.5539" stop-color="#ff1d6b"/><stop offset="0.5982" stop-color="#ff1053"/><stop offset="0.6720" stop-color="#ff0037"/><stop offset="0.7261" stop-color="#ff0028"/><stop offset="0.8343" stop-color="#ff0013"/><stop offset="0.9621" stop-color="#ff0003"/></linearGradient><linearGradient id="cf62" gradientUnits="userSpaceOnUse" x1="1150" x2="1760" y1="0" y2="0"><stop offset="0.0653" stop-color="#009fff"/><stop offset="0.2718" stop-color="#0183ff"/><stop offset="0.3407" stop-color="#6376ff"/><stop offset="0.3751" stop-color="#9c6fff"/><stop offset="0.4243" stop-color="#f963ff"/><stop offset="0.4292" stop-color="#ff60fb"/><stop offset="0.4587" stop-color="#ff46c8"/><stop offset="0.4833" stop-color="#ff36a9"/><stop offset="0.5030" stop-color="#ff2b95"/><stop offset="0.5473" stop-color="#ff1972"/><stop offset="0.6014" stop-color="#ff0a54"/><stop offset="0.6505" stop-color="#ff0041"/><stop offset="0.7440" stop-color="#ff0026"/><stop offset="0.8276" stop-color="#ff0016"/><stop offset="0.9358" stop-color="#ff0008"/></linearGradient><linearGradient id="cf63" gradientUnits="userSpaceOnUse" x1="1150" x2="1760" y1="0" y2="0"><stop offset="0.0686" stop-color="#0096ff"/><stop offset="0.2653" stop-color="#007aff"/><stop offset="0.2998" stop-color="#2a73ff"/><stop offset="0.3539" stop-color="#7a68ff"/><stop offset="0.3883" stop-color="#b460ff"/><stop offset="0.4276" stop-color="#ff55ff"/><stop offset="0.4375" stop-color="#ff4cec"/><stop offset="0.4670" stop-color="#ff37bf"/><stop offset="0.5014" stop-color="#ff2499"/><stop offset="0.5407" stop-color="#ff1579"/><stop offset="0.5899" stop-color="#ff085c"/><stop offset="0.6244" stop-color="#ff004d"/><stop offset="0.7276" stop-color="#ff002c"/><stop offset="0.8260" stop-color="#ff0018"/><stop offset="0.9047" stop-color="#ff000d"/></linearGradient><linearGradient id="cf64" gradientUnits="userSpaceOnUse" x1="1150" x2="1760" y1="0" y2="0"><stop offset="0.0719" stop-color="#008cff"/><stop offset="0.2637" stop-color="#0070ff"/><stop offset="0.3080" stop-color="#3967ff"/><stop offset="0.3474" stop-color="#725eff"/><stop offset="0.3867" stop-color="#b254ff"/><stop offset="0.4260" stop-color="#fb49ff"/><stop offset="0.4310" stop-color="#ff46fa"/><stop offset="0.4506" stop-color="#ff38d8"/><stop offset="0.4851" stop-color="#ff24ac"/><stop offset="0.5342" stop-color="#ff1180"/><stop offset="0.5736" stop-color="#ff0667"/><stop offset="0.6031" stop-color="#ff0058"/><stop offset="0.6867" stop-color="#ff0039"/><stop offset="0.7359" stop-color="#ff002c"/><stop offset="0.8785" stop-color="#ff0012"/></linearGradient><linearGradient id="cf65" gradientUnits="userSpaceOnUse" x1="1150" x2="1760" y1="0" y2="0"><stop offset="0.0755" stop-color="#0084ff"/><stop offset="0.2574" stop-color="#0067ff"/><stop offset="0.2623" stop-color="#0366ff"/><stop offset="0.3115" stop-color="#415cff"/><stop offset="0.3558" stop-color="#8151ff"/><stop offset="0.3902" stop-color="#b948ff"/><stop offset="0.4296" stop-color="#ff3cfe"/><stop offset="0.4492" stop-color="#ff2fdc"/><stop offset="0.4640" stop-color="#ff27c7"/><stop offset="0.4935" stop-color="#ff19a5"/><stop offset="0.5279" stop-color="#ff0d87"/><stop offset="0.5673" stop-color="#ff026d"/><stop offset="0.6017" stop-color="#ff005b"/><stop offset="0.6804" stop-color="#ff003d"/><stop offset="0.7443" stop-color="#ff002c"/><stop offset="0.8525" stop-color="#ff0018"/></linearGradient><linearGradient id="cf66" gradientUnits="userSpaceOnUse" x1="1150" x2="1760" y1="0" y2="0"><stop offset="0.0790" stop-color="#007bff"/><stop offset="0.2560" stop-color="#005eff"/><stop offset="0.2954" stop-color="#2f56ff"/><stop offset="0.3347" stop-color="#644cff"/><stop offset="0.3888" stop-color="#b73eff"/><stop offset="0.4282" stop-color="#fd32ff"/><stop offset="0.4331" stop-color="#ff30f8"/><stop offset="0.4626" stop-color="#ff1fcb"/><stop offset="0.4823" stop-color="#ff16b3"/><stop offset="0.5364" stop-color="#ff0583"/><stop offset="0.5659" stop-color="#ff0070"/><stop offset="0.6003" stop-color="#ff005e"/><stop offset="0.6593" stop-color="#ff0046"/><stop offset="0.7479" stop-color="#ff002d"/><stop offset="0.8216" stop-color="#ff001f"/></linearGradient><linearGradient id="cf67" gradientUnits="userSpaceOnUse" x1="1150" x2="1760" y1="0" y2="0"><stop offset="0.0828" stop-color="#0072ff"/><stop offset="0.2549" stop-color="#0255ff"/><stop offset="0.2991" stop-color="#374bff"/><stop offset="0.3532" stop-color="#813eff"/><stop offset="0.3828" stop-color="#ae36ff"/><stop offset="0.4270" stop-color="#f928ff"/><stop offset="0.4319" stop-color="#ff26fc"/><stop offset="0.4614" stop-color="#ff17ce"/><stop offset="0.4860" stop-color="#ff0db1"/><stop offset="0.5303" stop-color="#ff008a"/><stop offset="0.5647" stop-color="#ff0073"/><stop offset="0.6139" stop-color="#ff005a"/><stop offset="0.6778" stop-color="#ff0042"/><stop offset="0.7959" stop-color="#ff0025"/></linearGradient><linearGradient id="cf68" gradientUnits="userSpaceOnUse" x1="1150" x2="1760" y1="0" y2="0"><stop offset="0.0866" stop-color="#006aff"/><stop offset="0.2489" stop-color="#004eff"/><stop offset="0.2735" stop-color="#1b48ff"/><stop offset="0.3276" stop-color="#5f3bff"/><stop offset="0.3719" stop-color="#9e30ff"/><stop offset="0.4309" stop-color="#ff1dff"/><stop offset="0.4456" stop-color="#ff16e6"/><stop offset="0.4751" stop-color="#ff0abf"/><stop offset="0.5096" stop-color="#ff009d"/><stop offset="0.5489" stop-color="#ff007f"/><stop offset="0.6030" stop-color="#ff0061"/><stop offset="0.6571" stop-color="#ff004b"/><stop offset="0.7653" stop-color="#ff002d"/></linearGradient><linearGradient id="cf69" gradientUnits="userSpaceOnUse" x1="1150" x2="1760" y1="0" y2="0"><stop offset="0.0907" stop-color="#0062ff"/><stop offset="0.2481" stop-color="#0245ff"/><stop offset="0.2875" stop-color="#2f3dff"/><stop offset="0.3416" stop-color="#742fff"/><stop offset="0.3907" stop-color="#bc21ff"/><stop offset="0.4301" stop-color="#fd14ff"/><stop offset="0.4350" stop-color="#ff12f9"/><stop offset="0.4596" stop-color="#ff08d4"/><stop offset="0.4842" stop-color="#ff00b7"/><stop offset="0.5432" stop-color="#ff0085"/><stop offset="0.6120" stop-color="#ff005f"/><stop offset="0.6661" stop-color="#ff004a"/><stop offset="0.7399" stop-color="#ff0035"/></linearGradient><linearGradient id="cf70" gradientUnits="userSpaceOnUse" x1="1150" x2="1760" y1="0" y2="0"><stop offset="0.0950" stop-color="#005aff"/><stop offset="0.2425" stop-color="#003fff"/><stop offset="0.2917" stop-color="#3733ff"/><stop offset="0.3311" stop-color="#6829ff"/><stop offset="0.3851" stop-color="#b41aff"/><stop offset="0.4294" stop-color="#fb0bff"/><stop offset="0.4343" stop-color="#ff0afb"/><stop offset="0.4540" stop-color="#ff02dd"/><stop offset="0.4786" stop-color="#ff00bf"/><stop offset="0.5081" stop-color="#ff00a2"/><stop offset="0.5376" stop-color="#ff008b"/><stop offset="0.5671" stop-color="#ff0078"/><stop offset="0.6261" stop-color="#ff005b"/><stop offset="0.7097" stop-color="#ff003f"/></linearGradient><linearGradient id="cf71" gradientUnits="userSpaceOnUse" x1="1150" x2="1760" y1="0" y2="0"><stop offset="0.0995" stop-color="#0052ff"/><stop offset="0.2372" stop-color="#0038ff"/><stop offset="0.2716" stop-color="#2330ff"/><stop offset="0.3355" stop-color="#7020ff"/><stop offset="0.3896" stop-color="#bb10ff"/><stop offset="0.4339" stop-color="#ff01fd"/><stop offset="0.4536" stop-color="#ff00df"/><stop offset="0.4781" stop-color="#ff00c1"/><stop offset="0.5322" stop-color="#ff0091"/><stop offset="0.5913" stop-color="#ff006d"/><stop offset="0.6847" stop-color="#ff0048"/></linearGradient><linearGradient id="cf72" gradientUnits="userSpaceOnUse" x1="1150" x2="1760" y1="0" y2="0"><stop offset="0.1040" stop-color="#004bff"/><stop offset="0.2368" stop-color="#0231ff"/><stop offset="0.2909" stop-color="#3c24ff"/><stop offset="0.3450" stop-color="#7e15ff"/><stop offset="0.4138" stop-color="#e000ff"/><stop offset="0.4335" stop-color="#ff00fe"/><stop offset="0.4532" stop-color="#ff00e1"/><stop offset="0.4827" stop-color="#ff00be"/><stop offset="0.5319" stop-color="#ff0093"/><stop offset="0.5761" stop-color="#ff0077"/><stop offset="0.6548" stop-color="#ff0054"/></linearGradient><linearGradient id="cf73" gradientUnits="userSpaceOnUse" x1="1150" x2="1760" y1="0" y2="0"><stop offset="0.1086" stop-color="#0043ff"/><stop offset="0.2316" stop-color="#002bff"/><stop offset="0.2759" stop-color="#2e20ff"/><stop offset="0.3398" stop-color="#790fff"/><stop offset="0.3939" stop-color="#c200ff"/><stop offset="0.4332" stop-color="#fe00ff"/><stop offset="0.4775" stop-color="#ff00c5"/><stop offset="0.5267" stop-color="#ff0099"/><stop offset="0.5709" stop-color="#ff007c"/><stop offset="0.6300" stop-color="#ff0060"/></linearGradient><linearGradient id="cf74" gradientUnits="userSpaceOnUse" x1="1150" x2="1760" y1="0" y2="0"><stop offset="0.1134" stop-color="#003cff"/><stop offset="0.2265" stop-color="#0025ff"/><stop offset="0.2314" stop-color="#0324ff"/><stop offset="0.2806" stop-color="#3618ff"/><stop offset="0.3494" stop-color="#8705ff"/><stop offset="0.3691" stop-color="#a100ff"/><stop offset="0.4330" stop-color="#fd00ff"/><stop offset="0.4675" stop-color="#ff00d2"/><stop offset="0.5019" stop-color="#ff00af"/><stop offset="0.5461" stop-color="#ff008d"/><stop offset="0.6002" stop-color="#ff006f"/></linearGradient><linearGradient id="cf75" gradientUnits="userSpaceOnUse" x1="1150" x2="1760" y1="0" y2="0"><stop offset="0.1182" stop-color="#0035ff"/><stop offset="0.2264" stop-color="#021eff"/><stop offset="0.2706" stop-color="#2e14ff"/><stop offset="0.3297" stop-color="#7004ff"/><stop offset="0.3444" stop-color="#8200ff"/><stop offset="0.3838" stop-color="#b500ff"/><stop offset="0.4329" stop-color="#fc00ff"/><stop offset="0.4379" stop-color="#ff00fb"/><stop offset="0.4723" stop-color="#ff00ce"/><stop offset="0.4920" stop-color="#ff00ba"/><stop offset="0.5264" stop-color="#ff009d"/><stop offset="0.5706" stop-color="#ff0080"/></linearGradient><linearGradient id="cf76" gradientUnits="userSpaceOnUse" x1="1150" x2="1760" y1="0" y2="0"><stop offset="0.1233" stop-color="#002dff"/><stop offset="0.2216" stop-color="#0119ff"/><stop offset="0.2757" stop-color="#360cff"/><stop offset="0.3298" stop-color="#7200ff"/><stop offset="0.3790" stop-color="#af00ff"/><stop offset="0.4331" stop-color="#fb00ff"/><stop offset="0.4380" stop-color="#ff00fb"/><stop offset="0.4675" stop-color="#ff00d5"/><stop offset="0.4872" stop-color="#ff00c0"/><stop offset="0.5462" stop-color="#ff0091"/></linearGradient><linearGradient id="cf77" gradientUnits="userSpaceOnUse" x1="1150" x2="1760" y1="0" y2="0"><stop offset="0.1286" stop-color="#0026ff"/><stop offset="0.2171" stop-color="#0014ff"/><stop offset="0.2958" stop-color="#4e00ff"/><stop offset="0.3351" stop-color="#7a00ff"/><stop offset="0.3892" stop-color="#bd00ff"/><stop offset="0.4335" stop-color="#fb00ff"/><stop offset="0.4384" stop-color="#ff00fc"/><stop offset="0.4778" stop-color="#ff00cb"/><stop offset="0.5171" stop-color="#ff00a8"/></linearGradient><linearGradient id="cf78" gradientUnits="userSpaceOnUse" x1="1150" x2="1760" y1="0" y2="0"><stop offset="0.1341" stop-color="#0020ff"/><stop offset="0.2128" stop-color="#000fff"/><stop offset="0.2718" stop-color="#3800ff"/><stop offset="0.3357" stop-color="#7c00ff"/><stop offset="0.3849" stop-color="#b800ff"/><stop offset="0.4341" stop-color="#fb00ff"/><stop offset="0.4390" stop-color="#ff00fc"/><stop offset="0.4636" stop-color="#ff00dc"/><stop offset="0.4882" stop-color="#ff00c2"/></linearGradient><linearGradient id="cf79" gradientUnits="userSpaceOnUse" x1="1150" x2="1760" y1="0" y2="0"><stop offset="0.1399" stop-color="#0019ff"/><stop offset="0.2088" stop-color="#000aff"/><stop offset="0.2137" stop-color="#0309ff"/><stop offset="0.2481" stop-color="#2300ff"/><stop offset="0.3317" stop-color="#7900ff"/><stop offset="0.3956" stop-color="#c600ff"/><stop offset="0.4350" stop-color="#fc00ff"/><stop offset="0.4596" stop-color="#ff00e2"/></linearGradient><linearGradient id="cf80" gradientUnits="userSpaceOnUse" x1="1150" x2="1760" y1="0" y2="0"><stop offset="0.1463" stop-color="#0012ff"/><stop offset="0.2053" stop-color="#0005ff"/><stop offset="0.2102" stop-color="#0304ff"/><stop offset="0.2249" stop-color="#1000ff"/><stop offset="0.2889" stop-color="#4d00ff"/><stop offset="0.3331" stop-color="#7c00ff"/><stop offset="0.3971" stop-color="#c800ff"/><stop offset="0.4315" stop-color="#f600ff"/></linearGradient><linearGradient id="cf81" gradientUnits="userSpaceOnUse" x1="1150" x2="1760" y1="0" y2="0"><stop offset="0.1531" stop-color="#000bff"/><stop offset="0.2023" stop-color="#0000ff"/><stop offset="0.2171" stop-color="#0c00ff"/><stop offset="0.2663" stop-color="#3900ff"/><stop offset="0.3253" stop-color="#7500ff"/><stop offset="0.4040" stop-color="#d100ff"/></linearGradient><linearGradient id="cf82" gradientUnits="userSpaceOnUse" x1="1150" x2="1760" y1="0" y2="0"><stop offset="0.1606" stop-color="#0004ff"/><stop offset="0.2000" stop-color="#0100ff"/><stop offset="0.2196" stop-color="#1100ff"/><stop offset="0.2836" stop-color="#4c00ff"/><stop offset="0.3229" stop-color="#7400ff"/><stop offset="0.3770" stop-color="#b100ff"/></linearGradient><linearGradient id="cf83" gradientUnits="userSpaceOnUse" x1="1150" x2="1760" y1="0" y2="0"><stop offset="0.1692" stop-color="#0000ff"/><stop offset="0.1988" stop-color="#0300ff"/><stop offset="0.2824" stop-color="#4d00ff"/><stop offset="0.3512" stop-color="#9400ff"/></linearGradient><linearGradient id="cf84" gradientUnits="userSpaceOnUse" x1="1150" x2="1760" y1="0" y2="0"><stop offset="0.1797" stop-color="#0000ff"/><stop offset="0.1944" stop-color="#0200ff"/><stop offset="0.2190" stop-color="#1600ff"/><stop offset="0.2633" stop-color="#3d00ff"/><stop offset="0.3223" stop-color="#7700ff"/></linearGradient><linearGradient id="cf85" gradientUnits="userSpaceOnUse" x1="1150" x2="1760" y1="0" y2="0"><stop offset="0.1925" stop-color="#0300ff"/><stop offset="0.2958" stop-color="#5e00ff"/></linearGradient><linearGradient id="cf86" gradientUnits="userSpaceOnUse" x1="1150" x2="1760" y1="0" y2="0"><stop offset="0.2073" stop-color="#1200ff"/><stop offset="0.2663" stop-color="#4400ff"/></linearGradient><linearGradient id="cf87" gradientUnits="userSpaceOnUse" x1="1150" x2="1760" y1="0" y2="0"><stop offset="0.2295" stop-color="#2700ff"/><stop offset="0.2443" stop-color="#3300ff"/></linearGradient><clipPath id="lc"><path d="M1293.4 667.4L1293.4 667.4L1293.4 667.4L1293.4 667.4L1293.4 667.4L1293.3 667.4L1293.3 667.4L1293.2 667.4L1293.2 667.4L1293.2 667.4L1293.1 667.4L1293.1 667.4L1293.0 667.4L1293.0 667.5L1292.9 667.5L1292.9 667.5L1292.8 667.5L1292.7 667.5L1292.7 667.5L1292.6 667.5L1292.5 667.5L1292.5 667.5L1292.4 667.5L1292.3 667.5L1292.2 667.5L1292.1 667.5L1292.0 667.5L1291.9 667.5L1291.8 667.5L1291.7 667.5L1291.6 667.4L1291.4 667.4L1291.2 667.3L1291.0 667.2L1290.8 667.1L1290.6 667.0L1290.3 666.9L1290.1 666.7L1289.8 666.6L1289.5 666.4L1289.2 666.2L1288.8 666.0L1288.4 665.7L1288.0 665.4L1287.5 665.1L1287.1 664.8L1286.6 664.5L1286.1 664.1L1285.5 663.7L1284.9 663.3L1284.2 662.8L1283.5 662.4L1282.8 661.9L1281.9 661.3L1281.1 660.7L1280.1 660.1L1279.1 659.4L1278.0 658.7L1276.9 658.0L1275.7 657.2L1274.5 656.3L1273.2 655.4L1271.8 654.3L1270.3 653.2L1268.8 652.0L1267.2 650.6L1265.5 649.2L1263.7 647.6L1261.8 645.6L1259.7 643.3L1257.4 640.7L1255.0 637.8L1252.4 634.4L1249.7 630.6L1246.8 626.4L1243.8 621.7L1240.5 616.3L1237.1 610.2L1233.4 603.5L1229.6 596.0L1225.5 587.6L1221.1 578.4L1216.5 568.3L1211.7 557.3L1207.0 545.2L1202.2 531.9L1197.4 517.7L1192.6 502.4L1187.9 486.3L1183.2 469.0L1178.5 450.7L1174.0 431.8L1169.9 412.8L1166.2 393.4L1162.7 373.5L1159.7 353.6L1157.3 334.3L1155.5 315.4L1154.3 296.7L1153.6 278.7L1153.8 261.6L1154.7 245.3L1156.4 229.7L1158.8 215.1L1162.0 202.0L1166.1 190.3L1171.0 179.8L1176.5 170.8L1182.5 163.4L1189.1 157.8L1196.3 153.9L1203.8 151.3L1211.6 149.8L1219.5 149.5L1227.7 150.5L1236.0 152.4L1244.3 154.5L1252.6 157.1L1261.0 160.2L1269.3 163.7L1277.5 167.2L1285.5 170.8L1293.4 174.5L1301.2 178.4L1308.9 182.4L1316.5 186.5L1324.0 190.7L1331.5 195.0L1339.0 199.4L1346.4 204.0L1353.9 208.6L1361.3 213.4L1368.7 218.2L1376.1 223.1L1383.4 228.0L1390.7 233.1L1398.1 238.2L1405.4 243.3L1412.7 248.5L1420.0 253.7L1427.4 259.0L1434.7 264.3L1442.0 269.7L1449.4 275.1L1456.7 280.5L1464.0 285.9L1471.4 291.4L1478.7 296.8L1485.9 302.3L1493.2 307.7L1500.5 313.2L1507.8 318.7L1515.0 324.1L1522.2 329.5L1529.3 334.9L1536.4 340.3L1543.5 345.6L1550.5 350.9L1557.4 356.2L1564.3 361.4L1571.1 366.6L1577.8 371.7L1584.5 376.8L1591.1 381.8L1597.6 386.7L1604.0 391.6L1610.3 396.3L1616.5 401.0L1622.6 405.6L1628.5 410.1L1634.2 414.5L1639.9 418.8L1645.3 422.9L1650.5 426.8L1655.5 430.6L1660.3 434.3L1665.1 437.9L1669.6 441.3L1674.1 444.7L1678.4 448.0L1682.4 451.1L1686.3 454.0L1690.0 456.7L1693.5 459.4L1696.9 461.9L1700.1 464.3L1703.1 466.6L1705.9 468.8L1708.6 470.8L1711.2 472.8L1713.6 474.6L1715.8 476.3L1718.0 478.0L1720.0 479.5L1721.9 480.9L1723.7 482.3L1725.4 483.6L1727.1 484.8L1728.6 486.0L1730.0 487.1L1731.4 488.1L1732.8 489.2L1734.1 490.1L1735.3 491.1L1736.4 492.0L1737.5 492.8L1738.6 493.6L1739.6 494.4L1740.5 495.1L1741.4 495.7L1742.3 496.4L1743.1 497.0L1743.8 497.5L1744.5 498.0L1745.1 498.5L1745.7 499.0L1746.3 499.4L1746.8 499.8L1747.3 500.2L1747.7 500.5L1748.2 500.8L1748.6 501.1L1748.9 501.4L1749.3 501.7L1749.6 501.9L1749.8 502.1L1750.1 502.3L1750.3 502.4L1750.5 502.6L1750.7 502.7L1750.9 502.9L1751.0 503.0L1751.2 503.1L1751.4 503.3L1751.5 503.4L1751.6 503.5L1751.8 503.6L1751.9 503.7L1752.1 503.8L1752.2 503.9L1752.4 504.0L1752.5 504.1L1752.6 504.2L1752.7 504.3L1752.8 504.4L1752.9 504.5L1753.0 504.5L1753.1 504.6L1753.2 504.6L1753.2 504.7L1753.3 504.7L1753.3 504.7L1753.3 504.8L1753.4 504.8L1753.4 504.8L1753.4 504.8L1753.4 504.8Z"/></clipPath><filter id="vb" x="-5%" y="-5%" width="110%" height="110%" color-interpolation-filters="sRGB"><feGaussianBlur stdDeviation="2.5 3"/></filter><linearGradient id="ci0" gradientUnits="userSpaceOnUse" x1="1585" x2="1850.2" y1="0" y2="0"><stop offset="0.0000" stop-color="#a9ff00"/><stop offset="0.7843" stop-color="#fffe00"/><stop offset="0.9955" stop-color="#ffe700"/></linearGradient><linearGradient id="ci1" gradientUnits="userSpaceOnUse" x1="1585" x2="1850.2" y1="0" y2="0"><stop offset="0.0000" stop-color="#abff00"/><stop offset="0.4223" stop-color="#d8ff00"/><stop offset="0.7541" stop-color="#ffff00"/><stop offset="0.9955" stop-color="#ffe500"/></linearGradient><linearGradient id="ci2" gradientUnits="userSpaceOnUse" x1="1585" x2="1850.2" y1="0" y2="0"><stop offset="0.0000" stop-color="#adff00"/><stop offset="0.3318" stop-color="#d0ff00"/><stop offset="0.7240" stop-color="#feff00"/><stop offset="0.9955" stop-color="#ffe200"/></linearGradient><linearGradient id="ci3" gradientUnits="userSpaceOnUse" x1="1585" x2="1850.2" y1="0" y2="0"><stop offset="0.0000" stop-color="#afff01"/><stop offset="0.3922" stop-color="#d9ff00"/><stop offset="0.6938" stop-color="#fdff00"/><stop offset="0.7240" stop-color="#fffe00"/><stop offset="0.9955" stop-color="#ffe000"/></linearGradient><linearGradient id="ci4" gradientUnits="userSpaceOnUse" x1="1585" x2="1850.2" y1="0" y2="0"><stop offset="0.0000" stop-color="#b0ff02"/><stop offset="0.6938" stop-color="#ffff00"/><stop offset="0.9955" stop-color="#ffde00"/></linearGradient><linearGradient id="ci5" gradientUnits="userSpaceOnUse" x1="1585" x2="1850.2" y1="0" y2="0"><stop offset="0.0000" stop-color="#b2ff04"/><stop offset="0.1508" stop-color="#c3ff00"/><stop offset="0.6637" stop-color="#feff00"/><stop offset="0.9955" stop-color="#ffdc00"/></linearGradient><linearGradient id="ci6" gradientUnits="userSpaceOnUse" x1="1585" x2="1850.2" y1="0" y2="0"><stop offset="0.0000" stop-color="#b4ff05"/><stop offset="0.1810" stop-color="#c8ff00"/><stop offset="0.6335" stop-color="#fdff00"/><stop offset="0.9955" stop-color="#ffd900"/></linearGradient><linearGradient id="ci7" gradientUnits="userSpaceOnUse" x1="1585" x2="1850.2" y1="0" y2="0"><stop offset="0.0000" stop-color="#b7ff06"/><stop offset="0.2413" stop-color="#d1ff00"/><stop offset="0.6335" stop-color="#fffe00"/><stop offset="0.9955" stop-color="#ffd700"/></linearGradient><linearGradient id="ci8" gradientUnits="userSpaceOnUse" x1="1585" x2="1850.2" y1="0" y2="0"><stop offset="0.0000" stop-color="#b9ff07"/><stop offset="0.2715" stop-color="#d7ff00"/><stop offset="0.6033" stop-color="#ffff00"/><stop offset="0.9955" stop-color="#ffd500"/></linearGradient><linearGradient id="ci9" gradientUnits="userSpaceOnUse" x1="1585" x2="1850.2" y1="0" y2="0"><stop offset="0.0000" stop-color="#bbff08"/><stop offset="0.3318" stop-color="#e1ff00"/><stop offset="0.5732" stop-color="#feff00"/><stop offset="0.9955" stop-color="#ffd300"/></linearGradient><linearGradient id="ci10" gradientUnits="userSpaceOnUse" x1="1585" x2="1850.2" y1="0" y2="0"><stop offset="0.0000" stop-color="#bdff09"/><stop offset="0.3620" stop-color="#e7ff00"/><stop offset="0.5430" stop-color="#fdff00"/><stop offset="0.9955" stop-color="#ffd100"/></linearGradient><linearGradient id="ci11" gradientUnits="userSpaceOnUse" x1="1585" x2="1850.2" y1="0" y2="0"><stop offset="0.0000" stop-color="#bfff0b"/><stop offset="0.3620" stop-color="#e9ff01"/><stop offset="0.5430" stop-color="#ffff00"/><stop offset="0.7240" stop-color="#ffe900"/><stop offset="0.9955" stop-color="#ffce00"/></linearGradient><linearGradient id="ci12" gradientUnits="userSpaceOnUse" x1="1585" x2="1850.2" y1="0" y2="0"><stop offset="0.0000" stop-color="#c1ff0c"/><stop offset="0.5128" stop-color="#feff00"/><stop offset="0.8145" stop-color="#ffdd00"/><stop offset="0.9955" stop-color="#ffcc00"/></linearGradient><linearGradient id="ci13" gradientUnits="userSpaceOnUse" x1="1585" x2="1850.2" y1="0" y2="0"><stop offset="0.0000" stop-color="#c3ff0d"/><stop offset="0.4525" stop-color="#faff02"/><stop offset="0.5128" stop-color="#fffd00"/><stop offset="0.7541" stop-color="#ffe100"/><stop offset="0.9955" stop-color="#ffca00"/></linearGradient><linearGradient id="ci14" gradientUnits="userSpaceOnUse" x1="1585" x2="1850.2" y1="0" y2="0"><stop offset="0.0000" stop-color="#c6ff0e"/><stop offset="0.4827" stop-color="#fffe02"/><stop offset="0.6938" stop-color="#ffe500"/><stop offset="0.9955" stop-color="#ffc800"/></linearGradient><linearGradient id="ci15" gradientUnits="userSpaceOnUse" x1="1585" x2="1850.2" y1="0" y2="0"><stop offset="0.0000" stop-color="#c8ff0f"/><stop offset="0.4525" stop-color="#ffff04"/><stop offset="0.6335" stop-color="#ffe900"/><stop offset="0.9955" stop-color="#ffc600"/></linearGradient><linearGradient id="ci16" gradientUnits="userSpaceOnUse" x1="1585" x2="1850.2" y1="0" y2="0"><stop offset="0.0000" stop-color="#caff11"/><stop offset="0.4223" stop-color="#feff06"/><stop offset="0.6335" stop-color="#ffe700"/><stop offset="0.9955" stop-color="#ffc400"/></linearGradient><linearGradient id="ci17" gradientUnits="userSpaceOnUse" x1="1585" x2="1850.2" y1="0" y2="0"><stop offset="0.0000" stop-color="#ccff12"/><stop offset="0.4223" stop-color="#fffd07"/><stop offset="0.6938" stop-color="#ffde00"/><stop offset="0.9955" stop-color="#ffc200"/></linearGradient><linearGradient id="ci18" gradientUnits="userSpaceOnUse" x1="1585" x2="1850.2" y1="0" y2="0"><stop offset="0.0000" stop-color="#cfff13"/><stop offset="0.3922" stop-color="#fffe09"/><stop offset="0.7240" stop-color="#ffd900"/><stop offset="0.9955" stop-color="#ffc000"/></linearGradient><linearGradient id="ci19" gradientUnits="userSpaceOnUse" x1="1585" x2="1850.2" y1="0" y2="0"><stop offset="0.0000" stop-color="#d1ff15"/><stop offset="0.3620" stop-color="#feff0b"/><stop offset="0.6637" stop-color="#ffdc03"/><stop offset="0.9955" stop-color="#ffbe00"/></linearGradient><linearGradient id="ci20" gradientUnits="userSpaceOnUse" x1="1585" x2="1850.2" y1="0" y2="0"><stop offset="0.0000" stop-color="#d4ff16"/><stop offset="0.3620" stop-color="#fffd0d"/><stop offset="0.6033" stop-color="#ffe006"/><stop offset="0.8145" stop-color="#ffcb00"/><stop offset="0.9955" stop-color="#ffbc00"/></linearGradient><linearGradient id="ci21" gradientUnits="userSpaceOnUse" x1="1585" x2="1850.2" y1="0" y2="0"><stop offset="0.0000" stop-color="#d6ff17"/><stop offset="0.3318" stop-color="#fffe0f"/><stop offset="0.5430" stop-color="#ffe408"/><stop offset="0.8145" stop-color="#ffc901"/><stop offset="0.9955" stop-color="#ffba00"/></linearGradient><linearGradient id="ci22" gradientUnits="userSpaceOnUse" x1="1585" x2="1850.2" y1="0" y2="0"><stop offset="0.0000" stop-color="#d9ff19"/><stop offset="0.3017" stop-color="#ffff11"/><stop offset="0.6033" stop-color="#ffdb08"/><stop offset="0.9955" stop-color="#ffb800"/></linearGradient><linearGradient id="ci23" gradientUnits="userSpaceOnUse" x1="1585" x2="1850.2" y1="0" y2="0"><stop offset="0.0000" stop-color="#dbff1a"/><stop offset="0.2715" stop-color="#feff13"/><stop offset="0.5430" stop-color="#ffdf0b"/><stop offset="0.7843" stop-color="#ffc704"/><stop offset="0.9955" stop-color="#ffb600"/></linearGradient><linearGradient id="ci24" gradientUnits="userSpaceOnUse" x1="1585" x2="1850.2" y1="0" y2="0"><stop offset="0.0000" stop-color="#deff1b"/><stop offset="0.2715" stop-color="#fffd15"/><stop offset="0.5128" stop-color="#ffe00d"/><stop offset="0.7843" stop-color="#ffc505"/><stop offset="0.9955" stop-color="#ffb400"/></linearGradient><linearGradient id="ci25" gradientUnits="userSpaceOnUse" x1="1585" x2="1850.2" y1="0" y2="0"><stop offset="0.0000" stop-color="#e0ff1d"/><stop offset="0.2413" stop-color="#fffe17"/><stop offset="0.5732" stop-color="#ffd70c"/><stop offset="0.9955" stop-color="#ffb201"/></linearGradient><linearGradient id="ci26" gradientUnits="userSpaceOnUse" x1="1585" x2="1850.2" y1="0" y2="0"><stop offset="0.0000" stop-color="#e3ff1e"/><stop offset="0.2112" stop-color="#ffff19"/><stop offset="0.4827" stop-color="#ffde10"/><stop offset="0.7240" stop-color="#ffc609"/><stop offset="0.9955" stop-color="#ffb002"/></linearGradient><clipPath id="ic"><rect x="1601" y="154.2" width="233.20000000000005" height="196.3"/></clipPath><linearGradient id="rr" x1="0" x2="0" y1="0" y2="1"><stop offset="0" stop-color="#ff5c5c"/><stop offset="1" stop-color="#ff3434"/></linearGradient><linearGradient id="rg" x1="0" x2="0" y1="0" y2="1"><stop offset="0" stop-color="#5cac5c"/><stop offset="1" stop-color="#3ea43e"/></linearGradient><linearGradient id="rbl" x1="0" x2="0" y1="0" y2="1"><stop offset="0" stop-color="#5c5cff"/><stop offset="1" stop-color="#3030ff"/></linearGradient><linearGradient id="th" x1="0" x2="0" y1="0" y2="1"><stop offset="0" stop-color="#2c2c2c"/><stop offset="0.47" stop-color="#262626"/><stop offset="0.5" stop-color="#181818"/><stop offset="1" stop-color="#121212"/></linearGradient><linearGradient id="bbg" x1="0" x2="0" y1="0" y2="1"><stop offset="0" stop-color="#2f2f2f"/><stop offset="1" stop-color="#282828"/></linearGradient><linearGradient id="bsh" gradientUnits="userSpaceOnUse" x1="1480" x2="1563" y1="0" y2="0"><stop offset="0" stop-color="#1a1a1a" stop-opacity="0"/><stop offset="1" stop-color="#161616" stop-opacity="0.9"/></linearGradient><linearGradient id="bt" x1="0" x2="0" y1="0" y2="1"><stop offset="0" stop-color="#a6a6a6"/><stop offset="0.5" stop-color="#7e7e7e"/><stop offset="1" stop-color="#585858"/></linearGradient><linearGradient id="bt2" x1="0" x2="0" y1="0" y2="1"><stop offset="0" stop-color="#a4a4a4"/><stop offset="1" stop-color="#6c6c6c"/></linearGradient><linearGradient id="icc" x1="0" x2="0" y1="0" y2="1"><stop offset="0" stop-color="#747474"/><stop offset="1" stop-color="#acacac"/></linearGradient><linearGradient id="bt3" x1="0" x2="0" y1="0" y2="1"><stop offset="0" stop-color="#8e8e8e"/><stop offset="1" stop-color="#686868"/></linearGradient><linearGradient id="gl" x1="0" x2="0" y1="0" y2="1"><stop offset="0" stop-color="#bcbcbc"/><stop offset="0.5" stop-color="#b0b0b0"/><stop offset="0.5" stop-color="#949494"/><stop offset="1" stop-color="#9c9c9c"/></linearGradient><linearGradient id="gk" x1="0" x2="0" y1="0" y2="1"><stop offset="0" stop-color="#303030"/><stop offset="0.5" stop-color="#262626"/><stop offset="0.5" stop-color="#000"/><stop offset="1" stop-color="#000"/></linearGradient><linearGradient id="bn" x1="0" x2="0" y1="0" y2="1"><stop offset="0" stop-color="#bcbcbc"/><stop offset="0.08" stop-color="#a6a6a6"/><stop offset="1" stop-color="#6a6a6a"/></linearGradient></defs>
<rect x="0" y="0" width="1920" height="1039" fill="#333333"/>
<rect x="0" y="0" width="1920" height="26" fill="#ffffff"/>
<path d="M10.5 3.5L14.8 7.8L10.5 12.1L6.2 7.8Z" fill="#f6b40e"/>
<path d="M5.8 8.2L10.1 12.5L5.8 16.8L1.5 12.5Z" fill="#25a9e0"/>
<path d="M15.2 8.2L19.5 12.5L15.2 16.8L10.899999999999999 12.5Z" fill="#3db54a"/>
<path d="M10.5 12.899999999999999L14.8 17.2L10.5 21.5L6.2 17.2Z" fill="#e8356d"/>
<path d="M10.5 10.3L12.7 12.5L10.5 14.7L8.3 12.5Z" fill="#8a5fb0"/>
<text x="23.5" y="17.5" font-size="12.3" textLength="444" lengthAdjust="spacingAndGlyphs" fill="#111" stroke="#fff" stroke-width="0.12">Calman 2023 Calman Ultimate for Business 148 Days Remaining  - Untitled</text>
<line x1="1790" y1="12.5" x2="1800" y2="12.5" stroke="#222" stroke-width="1"/>
<path d="M1842.5 9.5h7.5v7.5h-7.5zM1844.5 9.5v-2h7.5v7.5h-2" fill="none" stroke="#222" stroke-width="1"/>
<path d="M1895 7.5l10.5 10.5M1905.5 7.5l-10.5 10.5" stroke="#222" stroke-width="1.1" fill="none"/>
<rect x="0" y="26" width="1920" height="73.5" fill="#222222"/>
<rect x="0" y="98.5" width="1920" height="1.5" fill="#2b2b2b"/>
<rect x="214" y="39.5" width="1712" height="5" fill="url(#rb)" rx="2"/>
<path d="M0 26H206V54.5Q206 58.5 202 58.5H4Q0 58.5 0 54.5Z" fill="url(#redb)"/>
<path d="M0.5 55Q1 58 4 58H202Q205.5 58 205.5 54.5V27" fill="none" stroke="#f0585c" stroke-width="1" opacity="0.6"/>
<g transform="translate(38.7,41.8) rotate(45) scale(1.07)" fill="#fdeef0"><rect x="-8.15" y="-8.15" width="16.3" height="16.3" rx="1.7" fill="none" stroke="#fdeef0" stroke-width="2.65"/><rect x="0.9" y="0.9" width="4.8" height="4.8" rx="0.9"/><rect x="-5.7" y="0.9" width="4.8" height="4.8" rx="0.9"/><rect x="0.9" y="-5.7" width="4.8" height="4.8" rx="0.9"/><rect x="-5.7" y="-5.7" width="4.8" height="4.8" rx="0.9"/><path d="M-7 0H7M0 -7V7" stroke="#c4161e" stroke-width="0.9" fill="none"/></g>
<text x="55.5" y="48.8" font-size="27" textLength="97" lengthAdjust="spacingAndGlyphs" fill="#fdeaea" stroke="#fdeaea" stroke-width="0.7">calman</text>
<circle cx="187" cy="42" r="11" fill="url(#rdd)"/>
<path d="M181.5 40h11l-5.5 6.2z" fill="#fff"/>
<path d="M0 65H26Q30 65 30 69V92.5Q30 96.5 26 96.5H0Z" fill="url(#pb)" stroke="#c8c8c8" stroke-width="1"/>
<circle cx="14.5" cy="80.5" r="11" fill="url(#pc)"/>
<path d="M11 73.5v12.5l6.5-6.2z" fill="#fff"/>
<path d="M33.5 99.5V70Q33.5 65.5 38 65.5H132Q136.5 65.5 136.5 70V99.5Z" fill="url(#ht)" stroke="#636363" stroke-width="1"/>
<line x1="99.5" y1="66" x2="99.5" y2="99" stroke="#606060" stroke-width="1"/>
<text x="40" y="87.8" font-size="13.6" textLength="52.5" lengthAdjust="spacingAndGlyphs" fill="#e6e6e6">History 1</text>
<circle cx="117" cy="84" r="10.5" fill="#3a3a3a"/>
<path d="M113.5 85.5h7M117 82v7" stroke="#9a9a9a" stroke-width="1" fill="none"/>
<path d="M1283.5 99V69Q1283.5 65.5 1287.5 65.5H1441Q1445 65.5 1445 69V99Z" fill="url(#db)"/>
<path d="M1283.5 99V69Q1283.5 65.5 1287.5 65.5H1291.0V99Z" fill="#24d024"/>
<circle cx="1382.7" cy="82.5" r="10.4" fill="url(#dc)"/>
<path d="M1377.5 80.6h10.4l-5.2 6z" fill="#fff"/>
<text x="1293.8" y="78.3" font-size="12.6" textLength="74.5" lengthAdjust="spacingAndGlyphs" fill="#f4f4f4">X-Rite i1Pro 2</text>
<text x="1293.8" y="94.5" font-size="12.6" textLength="62.5" lengthAdjust="spacingAndGlyphs" fill="#f4f4f4">Direct View</text>
<line x1="1405" y1="68" x2="1405" y2="99" stroke="#4e4e4e" stroke-width="1"/>
<line x1="1406" y1="68" x2="1406" y2="99" stroke="#7a7a7a" stroke-width="1"/>
<circle cx="1428" cy="82.5" r="14.3" fill="#0000e6" stroke="#e8e8ff" stroke-width="1.2"/>
<text x="1428" y="86.5" font-size="10.8" text-anchor="middle" textLength="17.5" lengthAdjust="spacingAndGlyphs" fill="#fff">236</text>
<path d="M1452 99V69Q1452 65.5 1456 65.5H1683Q1687 65.5 1687 69V99Z" fill="url(#db)"/>
<path d="M1452 99V69Q1452 65.5 1456 65.5H1459.5V99Z" fill="#24d024"/>
<circle cx="1669" cy="82.5" r="10.4" fill="url(#dc)"/>
<path d="M1663.8 80.6h10.4l-5.2 6z" fill="#fff"/>
<text x="1462.3" y="78.3" font-size="12.6" textLength="191.5" lengthAdjust="spacingAndGlyphs" fill="#f4f4f4">CalMAN Client 3 Pattern Generator</text>
<path d="M1694.2 99V69Q1694.2 65.5 1698.2 65.5H1851.7Q1855.7 65.5 1855.7 69V99Z" fill="url(#db)"/>
<path d="M1694.2 99V69Q1694.2 65.5 1698.2 65.5H1701.7V99Z" fill="#e6e620"/>
<circle cx="1837.5" cy="82.5" r="10.4" fill="url(#dc)"/>
<path d="M1832.3 80.6h10.4l-5.2 6z" fill="#fff"/>
<text x="1704.5" y="78.3" font-size="12.6" textLength="119" lengthAdjust="spacingAndGlyphs" fill="#f4f4f4">Direct Display Control</text>
<rect x="1860" y="65.6" width="36.4" height="30.8" rx="4.5" fill="url(#gb)" stroke="#c8c8c8" stroke-width="1.3"/>
<circle cx="1878.4" cy="81" r="11" fill="url(#pc)"/>
<g stroke="#ececec" stroke-width="2.2"><line x1="1883.40" y1="81.00" x2="1886.00" y2="81.00"/><line x1="1881.94" y1="84.54" x2="1883.77" y2="86.37"/><line x1="1878.40" y1="86.00" x2="1878.40" y2="88.60"/><line x1="1874.86" y1="84.54" x2="1873.03" y2="86.37"/><line x1="1873.40" y1="81.00" x2="1870.80" y2="81.00"/><line x1="1874.86" y1="77.46" x2="1873.03" y2="75.63"/><line x1="1878.40" y1="76.00" x2="1878.40" y2="73.40"/><line x1="1881.94" y1="77.46" x2="1883.77" y2="75.63"/></g>
<circle cx="1878.4" cy="81" r="4.4" fill="none" stroke="#ececec" stroke-width="2.5"/>
<path d="M1921 65.6H1903Q1898.6 65.6 1898.6 70V92Q1898.6 96.4 1903 96.4H1921Z" fill="url(#gb)" stroke="#c8c8c8" stroke-width="1.3"/>
<circle cx="1914.4" cy="81" r="11" fill="url(#pc)"/>
<path d="M1916.4 75v11.4l-5.9-5.7z" fill="#fff"/>
<text x="101.5" y="162.2" font-size="41" textLength="346.5" lengthAdjust="spacingAndGlyphs" fill="#f4f4f4" stroke="#333" stroke-width="0.5">Saturation Sweeps</text>
<text x="268.6" y="215" font-size="15.2" text-anchor="middle" textLength="84.5" lengthAdjust="spacingAndGlyphs" fill="#dadada">DeltaE 2000</text>
<rect x="122" y="220.5" width="331.5" height="440.0" fill="#242424"/>
<line x1="166" y1="220.5" x2="166" y2="660.5" stroke="#8e8e8e" stroke-width="2"/>
<line x1="210" y1="220.5" x2="210" y2="660.5" stroke="#8e8e8e" stroke-width="2"/>
<line x1="255" y1="220.5" x2="255" y2="660.5" stroke="#8e8e8e" stroke-width="2"/>
<line x1="299" y1="220.5" x2="299" y2="660.5" stroke="#8e8e8e" stroke-width="2"/>
<line x1="343" y1="220.5" x2="343" y2="660.5" stroke="#8e8e8e" stroke-width="2"/>
<line x1="387" y1="220.5" x2="387" y2="660.5" stroke="#8e8e8e" stroke-width="2"/>
<line x1="431" y1="220.5" x2="431" y2="660.5" stroke="#8e8e8e" stroke-width="2"/>
<line x1="116" y1="220.5" x2="454.0" y2="220.5" stroke="#b4b4b4" stroke-width="1.6"/>
<line x1="454.0" y1="220.5" x2="454.0" y2="660.5" stroke="#9a9a9a" stroke-width="2"/>
<line x1="122" y1="219.7" x2="122" y2="667.0" stroke="#a8a8a8" stroke-width="1.6"/>
<line x1="116" y1="660.5" x2="454.0" y2="660.5" stroke="#b4b4b4" stroke-width="2"/>
<line x1="116" y1="293.8333333333333" x2="122" y2="293.8333333333333" stroke="#b4b4b4" stroke-width="1.4"/>
<line x1="116" y1="367.16666666666663" x2="122" y2="367.16666666666663" stroke="#b4b4b4" stroke-width="1.4"/>
<line x1="116" y1="440.5" x2="122" y2="440.5" stroke="#b4b4b4" stroke-width="1.4"/>
<line x1="116" y1="513.8333333333333" x2="122" y2="513.8333333333333" stroke="#b4b4b4" stroke-width="1.4"/>
<line x1="116" y1="587.1666666666666" x2="122" y2="587.1666666666666" stroke="#b4b4b4" stroke-width="1.4"/>
<text x="122" y="683" font-size="14.8" text-anchor="middle" fill="#dadada">0</text>
<line x1="166" y1="660.5" x2="166" y2="667.0" stroke="#a8a8a8" stroke-width="1.8"/>
<text x="166" y="683" font-size="14.8" text-anchor="middle" fill="#dadada">2</text>
<line x1="210" y1="660.5" x2="210" y2="667.0" stroke="#a8a8a8" stroke-width="1.8"/>
<text x="210" y="683" font-size="14.8" text-anchor="middle" fill="#dadada">4</text>
<line x1="255" y1="660.5" x2="255" y2="667.0" stroke="#a8a8a8" stroke-width="1.8"/>
<text x="255" y="683" font-size="14.8" text-anchor="middle" fill="#dadada">6</text>
<line x1="299" y1="660.5" x2="299" y2="667.0" stroke="#a8a8a8" stroke-width="1.8"/>
<text x="299" y="683" font-size="14.8" text-anchor="middle" fill="#dadada">8</text>
<line x1="343" y1="660.5" x2="343" y2="667.0" stroke="#a8a8a8" stroke-width="1.8"/>
<text x="343" y="683" font-size="14.8" text-anchor="middle" fill="#dadada">10</text>
<line x1="387" y1="660.5" x2="387" y2="667.0" stroke="#a8a8a8" stroke-width="1.8"/>
<text x="387" y="683" font-size="14.8" text-anchor="middle" fill="#dadada">12</text>
<line x1="431" y1="660.5" x2="431" y2="667.0" stroke="#a8a8a8" stroke-width="1.8"/>
<text x="431" y="683" font-size="14.8" text-anchor="middle" fill="#dadada">14</text>
<text x="120.3" y="262.7666666666667" font-size="14.8" text-anchor="end" fill="#dadada">100%</text>
<text x="120.3" y="336.1" font-size="14.8" text-anchor="end" fill="#dadada">80%</text>
<text x="120.3" y="409.43333333333334" font-size="14.8" text-anchor="end" fill="#dadada">60%</text>
<text x="120.3" y="482.76666666666665" font-size="14.8" text-anchor="end" fill="#dadada">40%</text>
<text x="120.3" y="556.1" font-size="14.8" text-anchor="end" fill="#dadada">20%</text>
<text x="120.3" y="629.4333333333333" font-size="14.8" text-anchor="end" fill="#dadada">100</text>
<rect x="121.6" y="227.90" width="20.95" height="6.8" fill="#d01010" stroke="#000" stroke-width="1.2"/>
<rect x="122.19999999999999" y="228.50" width="19.75" height="5.6" fill="url(#bh)"/>
<rect x="122.19999999999999" y="228.50" width="19.75" height="5.6" fill="url(#bw)"/>
<rect x="121.6" y="236.60" width="13.44" height="6.8" fill="#10d010" stroke="#000" stroke-width="1.2"/>
<rect x="122.19999999999999" y="237.20" width="12.24" height="5.6" fill="url(#bh)"/>
<rect x="122.19999999999999" y="237.20" width="12.24" height="5.6" fill="url(#bw)"/>
<rect x="121.6" y="245.30" width="25.81" height="6.8" fill="#1818d0" stroke="#000" stroke-width="1.2"/>
<rect x="122.19999999999999" y="245.90" width="24.61" height="5.6" fill="url(#bh)"/>
<rect x="122.19999999999999" y="245.90" width="24.61" height="5.6" fill="url(#bw)"/>
<rect x="121.6" y="254.00" width="46.81" height="6.8" fill="#10d0d0" stroke="#000" stroke-width="1.2"/>
<rect x="122.19999999999999" y="254.60" width="45.61" height="5.6" fill="url(#bh)"/>
<rect x="122.19999999999999" y="254.60" width="45.61" height="5.6" fill="url(#bw)"/>
<rect x="121.6" y="262.70" width="31.34" height="6.8" fill="#d010d0" stroke="#000" stroke-width="1.2"/>
<rect x="122.19999999999999" y="263.30" width="30.14" height="5.6" fill="url(#bh)"/>
<rect x="122.19999999999999" y="263.30" width="30.14" height="5.6" fill="url(#bw)"/>
<rect x="121.6" y="271.40" width="43.94" height="6.8" fill="#d0d010" stroke="#000" stroke-width="1.2"/>
<rect x="122.19999999999999" y="272.00" width="42.74" height="5.6" fill="url(#bh)"/>
<rect x="122.19999999999999" y="272.00" width="42.74" height="5.6" fill="url(#bw)"/>
<rect x="121.6" y="301.23" width="24.05" height="6.8" fill="#d02f2f" stroke="#000" stroke-width="1.2"/>
<rect x="122.19999999999999" y="301.83" width="22.85" height="5.6" fill="url(#bh)"/>
<rect x="122.19999999999999" y="301.83" width="22.85" height="5.6" fill="url(#bw)"/>
<rect x="121.6" y="309.93" width="12.11" height="6.8" fill="#2fd02f" stroke="#000" stroke-width="1.2"/>
<rect x="122.19999999999999" y="310.53" width="10.91" height="5.6" fill="url(#bh)"/>
<rect x="122.19999999999999" y="310.53" width="10.91" height="5.6" fill="url(#bw)"/>
<rect x="121.6" y="318.63" width="36.87" height="6.8" fill="#3434d0" stroke="#000" stroke-width="1.2"/>
<rect x="122.19999999999999" y="319.23" width="35.66" height="5.6" fill="url(#bh)"/>
<rect x="122.19999999999999" y="319.23" width="35.66" height="5.6" fill="url(#bw)"/>
<rect x="121.6" y="327.33" width="51.23" height="6.8" fill="#2fd0d0" stroke="#000" stroke-width="1.2"/>
<rect x="122.19999999999999" y="327.93" width="50.03" height="5.6" fill="url(#bh)"/>
<rect x="122.19999999999999" y="327.93" width="50.03" height="5.6" fill="url(#bw)"/>
<rect x="121.6" y="336.03" width="26.92" height="6.8" fill="#d02fd0" stroke="#000" stroke-width="1.2"/>
<rect x="122.19999999999999" y="336.63" width="25.72" height="5.6" fill="url(#bh)"/>
<rect x="122.19999999999999" y="336.63" width="25.72" height="5.6" fill="url(#bw)"/>
<rect x="121.6" y="344.73" width="49.90" height="6.8" fill="#d0d02f" stroke="#000" stroke-width="1.2"/>
<rect x="122.19999999999999" y="345.33" width="48.70" height="5.6" fill="url(#bh)"/>
<rect x="122.19999999999999" y="345.33" width="48.70" height="5.6" fill="url(#bw)"/>
<rect x="121.6" y="374.57" width="28.47" height="6.8" fill="#d04e4e" stroke="#000" stroke-width="1.2"/>
<rect x="122.19999999999999" y="375.17" width="27.27" height="5.6" fill="url(#bh)"/>
<rect x="122.19999999999999" y="375.17" width="27.27" height="5.6" fill="url(#bw)"/>
<rect x="121.6" y="383.27" width="15.43" height="6.8" fill="#4ed04e" stroke="#000" stroke-width="1.2"/>
<rect x="122.19999999999999" y="383.87" width="14.23" height="5.6" fill="url(#bh)"/>
<rect x="122.19999999999999" y="383.87" width="14.23" height="5.6" fill="url(#bw)"/>
<rect x="121.6" y="391.97" width="36.87" height="6.8" fill="#5050d0" stroke="#000" stroke-width="1.2"/>
<rect x="122.19999999999999" y="392.57" width="35.66" height="5.6" fill="url(#bh)"/>
<rect x="122.19999999999999" y="392.57" width="35.66" height="5.6" fill="url(#bw)"/>
<rect x="121.6" y="400.67" width="63.16" height="6.8" fill="#4ed0d0" stroke="#000" stroke-width="1.2"/>
<rect x="122.19999999999999" y="401.27" width="61.96" height="5.6" fill="url(#bh)"/>
<rect x="122.19999999999999" y="401.27" width="61.96" height="5.6" fill="url(#bw)"/>
<rect x="121.6" y="409.37" width="32.67" height="6.8" fill="#d04ed0" stroke="#000" stroke-width="1.2"/>
<rect x="122.19999999999999" y="409.97" width="31.47" height="5.6" fill="url(#bh)"/>
<rect x="122.19999999999999" y="409.97" width="31.47" height="5.6" fill="url(#bw)"/>
<rect x="121.6" y="418.07" width="55.43" height="6.8" fill="#d0d04e" stroke="#000" stroke-width="1.2"/>
<rect x="122.19999999999999" y="418.67" width="54.23" height="5.6" fill="url(#bh)"/>
<rect x="122.19999999999999" y="418.67" width="54.23" height="5.6" fill="url(#bw)"/>
<rect x="121.6" y="447.90" width="35.32" height="6.8" fill="#d06d6d" stroke="#000" stroke-width="1.2"/>
<rect x="122.19999999999999" y="448.50" width="34.12" height="5.6" fill="url(#bh)"/>
<rect x="122.19999999999999" y="448.50" width="34.12" height="5.6" fill="url(#bw)"/>
<rect x="121.6" y="456.60" width="27.80" height="6.8" fill="#6dd06d" stroke="#000" stroke-width="1.2"/>
<rect x="122.19999999999999" y="457.20" width="26.60" height="5.6" fill="url(#bh)"/>
<rect x="122.19999999999999" y="457.20" width="26.60" height="5.6" fill="url(#bw)"/>
<rect x="121.6" y="465.30" width="48.80" height="6.8" fill="#6c6cd0" stroke="#000" stroke-width="1.2"/>
<rect x="122.19999999999999" y="465.90" width="47.60" height="5.6" fill="url(#bh)"/>
<rect x="122.19999999999999" y="465.90" width="47.60" height="5.6" fill="url(#bw)"/>
<rect x="121.6" y="474.00" width="83.05" height="6.8" fill="#6dd0d0" stroke="#000" stroke-width="1.2"/>
<rect x="122.19999999999999" y="474.60" width="81.85" height="5.6" fill="url(#bh)"/>
<rect x="122.19999999999999" y="474.60" width="81.85" height="5.6" fill="url(#bw)"/>
<rect x="121.6" y="482.70" width="39.30" height="6.8" fill="#d06dd0" stroke="#000" stroke-width="1.2"/>
<rect x="122.19999999999999" y="483.30" width="38.10" height="5.6" fill="url(#bh)"/>
<rect x="122.19999999999999" y="483.30" width="38.10" height="5.6" fill="url(#bw)"/>
<rect x="121.6" y="491.40" width="69.57" height="6.8" fill="#d0d06d" stroke="#000" stroke-width="1.2"/>
<rect x="122.19999999999999" y="492.00" width="68.37" height="5.6" fill="url(#bh)"/>
<rect x="122.19999999999999" y="492.00" width="68.37" height="5.6" fill="url(#bw)"/>
<rect x="121.6" y="521.23" width="55.43" height="6.8" fill="#d08c8c" stroke="#000" stroke-width="1.2"/>
<rect x="122.19999999999999" y="521.83" width="54.23" height="5.6" fill="url(#bh)"/>
<rect x="122.19999999999999" y="521.83" width="54.23" height="5.6" fill="url(#bw)"/>
<rect x="121.6" y="529.93" width="46.81" height="6.8" fill="#8cd08c" stroke="#000" stroke-width="1.2"/>
<rect x="122.19999999999999" y="530.53" width="45.61" height="5.6" fill="url(#bh)"/>
<rect x="122.19999999999999" y="530.53" width="45.61" height="5.6" fill="url(#bw)"/>
<rect x="121.6" y="538.63" width="61.40" height="6.8" fill="#8888d0" stroke="#000" stroke-width="1.2"/>
<rect x="122.19999999999999" y="539.23" width="60.20" height="5.6" fill="url(#bh)"/>
<rect x="122.19999999999999" y="539.23" width="60.20" height="5.6" fill="url(#bw)"/>
<rect x="121.6" y="547.33" width="110.46" height="6.8" fill="#8cd0d0" stroke="#000" stroke-width="1.2"/>
<rect x="122.19999999999999" y="547.93" width="109.26" height="5.6" fill="url(#bh)"/>
<rect x="122.19999999999999" y="547.93" width="109.26" height="5.6" fill="url(#bw)"/>
<rect x="121.6" y="556.03" width="59.85" height="6.8" fill="#d08cd0" stroke="#000" stroke-width="1.2"/>
<rect x="122.19999999999999" y="556.63" width="58.65" height="5.6" fill="url(#bh)"/>
<rect x="122.19999999999999" y="556.63" width="58.65" height="5.6" fill="url(#bw)"/>
<rect x="121.6" y="564.73" width="113.55" height="6.8" fill="#d0d08c" stroke="#000" stroke-width="1.2"/>
<rect x="122.19999999999999" y="565.33" width="112.35" height="5.6" fill="url(#bh)"/>
<rect x="122.19999999999999" y="565.33" width="112.35" height="5.6" fill="url(#bw)"/>
<rect x="123" y="646.97" width="141.32" height="6.4" fill="url(#wb)" stroke="#000" stroke-width="1.2"/>
<rect x="510.6" y="149.2" width="153.79999999999995" height="336.6" fill="#242424"/>
<line x1="504.6" y1="206" x2="664.4" y2="206" stroke="#a6a6a6" stroke-width="1.25"/>
<line x1="504.6" y1="261" x2="664.4" y2="261" stroke="#a6a6a6" stroke-width="1.25"/>
<line x1="504.6" y1="317.3" x2="664.4" y2="317.3" stroke="#a6a6a6" stroke-width="1.25"/>
<line x1="504.6" y1="374" x2="664.4" y2="374" stroke="#a6a6a6" stroke-width="1.25"/>
<line x1="504.6" y1="430.4" x2="664.4" y2="430.4" stroke="#a6a6a6" stroke-width="1.25"/>
<line x1="504.6" y1="149.2" x2="664.9" y2="149.2" stroke="#b0b0b0" stroke-width="2.6"/>
<line x1="504.6" y1="485.8" x2="664.9" y2="485.8" stroke="#b0b0b0" stroke-width="2"/>
<line x1="510.6" y1="148.2" x2="510.6" y2="492.8" stroke="#b0b0b0" stroke-width="1.6"/>
<line x1="664.4" y1="148.2" x2="664.4" y2="492.8" stroke="#a8a8a8" stroke-width="1.3"/>
<text x="504.1" y="154.89999999999998" font-size="14.8" text-anchor="end" fill="#dadada">15</text>
<text x="504.1" y="211.0" font-size="14.8" text-anchor="end" fill="#dadada">10</text>
<text x="504.1" y="267.09999999999997" font-size="14.8" text-anchor="end" fill="#dadada">5</text>
<text x="504.1" y="323.2" font-size="14.8" text-anchor="end" fill="#dadada">0</text>
<text x="504.1" y="379.3" font-size="14.8" text-anchor="end" fill="#dadada">-5</text>
<text x="504.1" y="435.4" font-size="14.8" text-anchor="end" fill="#dadada">-10</text>
<text x="504.1" y="491.5" font-size="14.8" text-anchor="end" fill="#dadada">-15</text>
<text x="573.4" y="143.2" font-size="15.4" text-anchor="middle" fill="#dadada">Delta L</text>
<text x="587.7" y="502" font-size="14.8" text-anchor="middle" fill="#dadada">100%</text>
<rect x="525.8000000000001" y="315.7" width="123.39999999999986" height="3.2" fill="#000"/>
<rect x="720.8" y="149.2" width="153.79999999999995" height="336.6" fill="#242424"/>
<line x1="714.8" y1="206" x2="874.5999999999999" y2="206" stroke="#a6a6a6" stroke-width="1.25"/>
<line x1="714.8" y1="261" x2="874.5999999999999" y2="261" stroke="#a6a6a6" stroke-width="1.25"/>
<line x1="714.8" y1="317.3" x2="874.5999999999999" y2="317.3" stroke="#a6a6a6" stroke-width="1.25"/>
<line x1="714.8" y1="374" x2="874.5999999999999" y2="374" stroke="#a6a6a6" stroke-width="1.25"/>
<line x1="714.8" y1="430.4" x2="874.5999999999999" y2="430.4" stroke="#a6a6a6" stroke-width="1.25"/>
<line x1="714.8" y1="149.2" x2="875.0999999999999" y2="149.2" stroke="#b0b0b0" stroke-width="2.6"/>
<line x1="714.8" y1="485.8" x2="875.0999999999999" y2="485.8" stroke="#b0b0b0" stroke-width="2"/>
<line x1="720.8" y1="148.2" x2="720.8" y2="492.8" stroke="#b0b0b0" stroke-width="1.6"/>
<line x1="874.5999999999999" y1="148.2" x2="874.5999999999999" y2="492.8" stroke="#a8a8a8" stroke-width="1.3"/>
<text x="714.3" y="154.89999999999998" font-size="14.8" text-anchor="end" fill="#dadada">15</text>
<text x="714.3" y="211.0" font-size="14.8" text-anchor="end" fill="#dadada">10</text>
<text x="714.3" y="267.09999999999997" font-size="14.8" text-anchor="end" fill="#dadada">5</text>
<text x="714.3" y="323.2" font-size="14.8" text-anchor="end" fill="#dadada">0</text>
<text x="714.3" y="379.3" font-size="14.8" text-anchor="end" fill="#dadada">-5</text>
<text x="714.3" y="435.4" font-size="14.8" text-anchor="end" fill="#dadada">-10</text>
<text x="714.3" y="491.5" font-size="14.8" text-anchor="end" fill="#dadada">-15</text>
<text x="783.5999999999999" y="143.2" font-size="15.4" text-anchor="middle" fill="#dadada">Delta C</text>
<text x="797.9" y="502" font-size="14.8" text-anchor="middle" fill="#dadada">100%</text>
<rect x="736.0" y="317.2" width="123.39999999999986" height="19.1" fill="url(#yb)" stroke="#000" stroke-width="1.3"/>
<rect x="930.6" y="149.2" width="153.80000000000007" height="336.6" fill="#242424"/>
<line x1="924.6" y1="206" x2="1084.4" y2="206" stroke="#a6a6a6" stroke-width="1.25"/>
<line x1="924.6" y1="261" x2="1084.4" y2="261" stroke="#a6a6a6" stroke-width="1.25"/>
<line x1="924.6" y1="317.3" x2="1084.4" y2="317.3" stroke="#a6a6a6" stroke-width="1.25"/>
<line x1="924.6" y1="374" x2="1084.4" y2="374" stroke="#a6a6a6" stroke-width="1.25"/>
<line x1="924.6" y1="430.4" x2="1084.4" y2="430.4" stroke="#a6a6a6" stroke-width="1.25"/>
<line x1="924.6" y1="149.2" x2="1084.9" y2="149.2" stroke="#b0b0b0" stroke-width="2.6"/>
<line x1="924.6" y1="485.8" x2="1084.9" y2="485.8" stroke="#b0b0b0" stroke-width="2"/>
<line x1="930.6" y1="148.2" x2="930.6" y2="492.8" stroke="#b0b0b0" stroke-width="1.6"/>
<line x1="1084.4" y1="148.2" x2="1084.4" y2="492.8" stroke="#a8a8a8" stroke-width="1.3"/>
<text x="924.1" y="154.89999999999998" font-size="14.8" text-anchor="end" fill="#dadada">15</text>
<text x="924.1" y="211.0" font-size="14.8" text-anchor="end" fill="#dadada">10</text>
<text x="924.1" y="267.09999999999997" font-size="14.8" text-anchor="end" fill="#dadada">5</text>
<text x="924.1" y="323.2" font-size="14.8" text-anchor="end" fill="#dadada">0</text>
<text x="924.1" y="379.3" font-size="14.8" text-anchor="end" fill="#dadada">-5</text>
<text x="924.1" y="435.4" font-size="14.8" text-anchor="end" fill="#dadada">-10</text>
<text x="924.1" y="491.5" font-size="14.8" text-anchor="end" fill="#dadada">-15</text>
<text x="993.4" y="143.2" font-size="15.4" text-anchor="middle" fill="#dadada">Delta H</text>
<text x="1007.7" y="502" font-size="14.8" text-anchor="middle" fill="#dadada">100%</text>
<rect x="945.8000000000001" y="317.2" width="123.39999999999998" height="41.0" fill="url(#yb)" stroke="#000" stroke-width="1.3"/>
<rect x="475" y="520" width="630" height="173.5" fill="#000"/>
<rect x="497.5" y="528" width="105.5" height="140.8" fill="#c9c1a9"/>
<rect x="497.5" y="598" width="105.5" height="70.8" fill="#bfc5a9" shape-rendering="crispEdges"/>
<rect x="497.5" y="528" width="105.5" height="140.8" fill="none" stroke="#f2f2f2" stroke-width="1.4"/>
<text x="550.2" y="685" font-size="12.6" text-anchor="middle" fill="#fff">20%</text>
<rect x="620.6" y="528" width="105.5" height="140.8" fill="#c9c18b"/>
<rect x="620.6" y="598" width="105.5" height="70.8" fill="#bfc389" shape-rendering="crispEdges"/>
<rect x="620.6" y="528" width="105.5" height="140.8" fill="none" stroke="#f2f2f2" stroke-width="1.4"/>
<text x="673.3000000000001" y="685" font-size="12.6" text-anchor="middle" fill="#fff">40%</text>
<rect x="743.7" y="528" width="105.5" height="140.8" fill="#c9bf6f"/>
<rect x="743.7" y="598" width="105.5" height="70.8" fill="#c1c16b" shape-rendering="crispEdges"/>
<rect x="743.7" y="528" width="105.5" height="140.8" fill="none" stroke="#f2f2f2" stroke-width="1.4"/>
<text x="796.4000000000001" y="685" font-size="12.6" text-anchor="middle" fill="#fff">60%</text>
<rect x="866.8" y="528" width="105.5" height="140.8" fill="#c9bd4f"/>
<rect x="866.8" y="598" width="105.5" height="70.8" fill="#c1bf4b" shape-rendering="crispEdges"/>
<rect x="866.8" y="528" width="105.5" height="140.8" fill="none" stroke="#f2f2f2" stroke-width="1.4"/>
<text x="919.5" y="685" font-size="12.6" text-anchor="middle" fill="#fff">80%</text>
<rect x="989.9" y="528" width="105.5" height="140.8" fill="#c9c10f"/>
<rect x="989.9" y="598" width="105.5" height="70.8" fill="#c5c500" shape-rendering="crispEdges"/>
<rect x="989.9" y="528" width="105.5" height="140.8" fill="none" stroke="#f2f2f2" stroke-width="1.4"/>
<text x="1042.6" y="685" font-size="12.6" text-anchor="middle" fill="#fff">100%</text>
<text transform="translate(489.5,558.5) rotate(-90)" font-size="12.6" text-anchor="middle" fill="#fff">Actual</text>
<text transform="translate(489.5,638) rotate(-90)" font-size="12.6" text-anchor="middle" fill="#fff">Target</text>
<rect x="1116.5" y="118.5" width="732" height="586" fill="none" stroke="#c5bf10" stroke-width="7"/>
<rect x="1113" y="115" width="739" height="593" fill="none" stroke="#3a3a14" stroke-width="1" opacity="0.7"/>
<rect x="1120" y="122" width="725" height="579" fill="none" stroke="#3a3a14" stroke-width="1" opacity="0.6"/>
<text x="1482" y="140.5" font-size="14.6" text-anchor="middle" textLength="79.5" lengthAdjust="spacingAndGlyphs" fill="#dadada">CIE 1931 xy</text>
<rect x="1150.6" y="147" width="690.4000000000001" height="522.8" fill="#262626"/>
<g clip-path="url(#lc)"><g filter="url(#vb)"><rect x="1150" y="144.00" width="610" height="6.5" fill="url(#cf0)"/><rect x="1150" y="150.00" width="610" height="6.5" fill="url(#cf1)"/><rect x="1150" y="156.00" width="610" height="6.5" fill="url(#cf2)"/><rect x="1150" y="162.00" width="610" height="6.5" fill="url(#cf3)"/><rect x="1150" y="168.00" width="610" height="6.5" fill="url(#cf4)"/><rect x="1150" y="174.00" width="610" height="6.5" fill="url(#cf5)"/><rect x="1150" y="180.00" width="610" height="6.5" fill="url(#cf6)"/><rect x="1150" y="186.00" width="610" height="6.5" fill="url(#cf7)"/><rect x="1150" y="192.00" width="610" height="6.5" fill="url(#cf8)"/><rect x="1150" y="198.00" width="610" height="6.5" fill="url(#cf9)"/><rect x="1150" y="204.00" width="610" height="6.5" fill="url(#cf10)"/><rect x="1150" y="210.00" width="610" height="6.5" fill="url(#cf11)"/><rect x="1150" y="216.00" width="610" height="6.5" fill="url(#cf12)"/><rect x="1150" y="222.00" width="610" height="6.5" fill="url(#cf13)"/><rect x="1150" y="228.00" width="610" height="6.5" fill="url(#cf14)"/><rect x="1150" y="234.00" width="610" height="6.5" fill="url(#cf15)"/><rect x="1150" y="240.00" width="610" height="6.5" fill="url(#cf16)"/><rect x="1150" y="246.00" width="610" height="6.5" fill="url(#cf17)"/><rect x="1150" y="252.00" width="610" height="6.5" fill="url(#cf18)"/><rect x="1150" y="258.00" width="610" height="6.5" fill="url(#cf19)"/><rect x="1150" y="264.00" width="610" height="6.5" fill="url(#cf20)"/><rect x="1150" y="270.00" width="610" height="6.5" fill="url(#cf21)"/><rect x="1150" y="276.00" width="610" height="6.5" fill="url(#cf22)"/><rect x="1150" y="282.00" width="610" height="6.5" fill="url(#cf23)"/><rect x="1150" y="288.00" width="610" height="6.5" fill="url(#cf24)"/><rect x="1150" y="294.00" width="610" height="6.5" fill="url(#cf25)"/><rect x="1150" y="300.00" width="610" height="6.5" fill="url(#cf26)"/><rect x="1150" y="306.00" width="610" height="6.5" fill="url(#cf27)"/><rect x="1150" y="312.00" width="610" height="6.5" fill="url(#cf28)"/><rect x="1150" y="318.00" width="610" height="6.5" fill="url(#cf29)"/><rect x="1150" y="324.00" width="610" height="6.5" fill="url(#cf30)"/><rect x="1150" y="330.00" width="610" height="6.5" fill="url(#cf31)"/><rect x="1150" y="336.00" width="610" height="6.5" fill="url(#cf32)"/><rect x="1150" y="342.00" width="610" height="6.5" fill="url(#cf33)"/><rect x="1150" y="348.00" width="610" height="6.5" fill="url(#cf34)"/><rect x="1150" y="354.00" width="610" height="6.5" fill="url(#cf35)"/><rect x="1150" y="360.00" width="610" height="6.5" fill="url(#cf36)"/><rect x="1150" y="366.00" width="610" height="6.5" fill="url(#cf37)"/><rect x="1150" y="372.00" width="610" height="6.5" fill="url(#cf38)"/><rect x="1150" y="378.00" width="610" height="6.5" fill="url(#cf39)"/><rect x="1150" y="384.00" width="610" height="6.5" fill="url(#cf40)"/><rect x="1150" y="390.00" width="610" height="6.5" fill="url(#cf41)"/><rect x="1150" y="396.00" width="610" height="6.5" fill="url(#cf42)"/><rect x="1150" y="402.00" width="610" height="6.5" fill="url(#cf43)"/><rect x="1150" y="408.00" width="610" height="6.5" fill="url(#cf44)"/><rect x="1150" y="414.00" width="610" height="6.5" fill="url(#cf45)"/><rect x="1150" y="420.00" width="610" height="6.5" fill="url(#cf46)"/><rect x="1150" y="426.00" width="610" height="6.5" fill="url(#cf47)"/><rect x="1150" y="432.00" width="610" height="6.5" fill="url(#cf48)"/><rect x="1150" y="438.00" width="610" height="6.5" fill="url(#cf49)"/><rect x="1150" y="444.00" width="610" height="6.5" fill="url(#cf50)"/><rect x="1150" y="450.00" width="610" height="6.5" fill="url(#cf51)"/><rect x="1150" y="456.00" width="610" height="6.5" fill="url(#cf52)"/><rect x="1150" y="462.00" width="610" height="6.5" fill="url(#cf53)"/><rect x="1150" y="468.00" width="610" height="6.5" fill="url(#cf54)"/><rect x="1150" y="474.00" width="610" height="6.5" fill="url(#cf55)"/><rect x="1150" y="480.00" width="610" height="6.5" fill="url(#cf56)"/><rect x="1150" y="486.00" width="610" height="6.5" fill="url(#cf57)"/><rect x="1150" y="492.00" width="610" height="6.5" fill="url(#cf58)"/><rect x="1150" y="498.00" width="610" height="6.5" fill="url(#cf59)"/><rect x="1150" y="504.00" width="610" height="6.5" fill="url(#cf60)"/><rect x="1150" y="510.00" width="610" height="6.5" fill="url(#cf61)"/><rect x="1150" y="516.00" width="610" height="6.5" fill="url(#cf62)"/><rect x="1150" y="522.00" width="610" height="6.5" fill="url(#cf63)"/><rect x="1150" y="528.00" width="610" height="6.5" fill="url(#cf64)"/><rect x="1150" y="534.00" width="610" height="6.5" fill="url(#cf65)"/><rect x="1150" y="540.00" width="610" height="6.5" fill="url(#cf66)"/><rect x="1150" y="546.00" width="610" height="6.5" fill="url(#cf67)"/><rect x="1150" y="552.00" width="610" height="6.5" fill="url(#cf68)"/><rect x="1150" y="558.00" width="610" height="6.5" fill="url(#cf69)"/><rect x="1150" y="564.00" width="610" height="6.5" fill="url(#cf70)"/><rect x="1150" y="570.00" width="610" height="6.5" fill="url(#cf71)"/><rect x="1150" y="576.00" width="610" height="6.5" fill="url(#cf72)"/><rect x="1150" y="582.00" width="610" height="6.5" fill="url(#cf73)"/><rect x="1150" y="588.00" width="610" height="6.5" fill="url(#cf74)"/><rect x="1150" y="594.00" width="610" height="6.5" fill="url(#cf75)"/><rect x="1150" y="600.00" width="610" height="6.5" fill="url(#cf76)"/><rect x="1150" y="606.00" width="610" height="6.5" fill="url(#cf77)"/><rect x="1150" y="612.00" width="610" height="6.5" fill="url(#cf78)"/><rect x="1150" y="618.00" width="610" height="6.5" fill="url(#cf79)"/><rect x="1150" y="624.00" width="610" height="6.5" fill="url(#cf80)"/><rect x="1150" y="630.00" width="610" height="6.5" fill="url(#cf81)"/><rect x="1150" y="636.00" width="610" height="6.5" fill="url(#cf82)"/><rect x="1150" y="642.00" width="610" height="6.5" fill="url(#cf83)"/><rect x="1150" y="648.00" width="610" height="6.5" fill="url(#cf84)"/><rect x="1150" y="654.00" width="610" height="6.5" fill="url(#cf85)"/><rect x="1150" y="660.00" width="610" height="6.5" fill="url(#cf86)"/><rect x="1150" y="666.00" width="610" height="6.5" fill="url(#cf87)"/></g><path d="M1293.4 667.4L1293.4 667.4L1293.4 667.4L1293.4 667.4L1293.4 667.4L1293.3 667.4L1293.3 667.4L1293.2 667.4L1293.2 667.4L1293.2 667.4L1293.1 667.4L1293.1 667.4L1293.0 667.4L1293.0 667.5L1292.9 667.5L1292.9 667.5L1292.8 667.5L1292.7 667.5L1292.7 667.5L1292.6 667.5L1292.5 667.5L1292.5 667.5L1292.4 667.5L1292.3 667.5L1292.2 667.5L1292.1 667.5L1292.0 667.5L1291.9 667.5L1291.8 667.5L1291.7 667.5L1291.6 667.4L1291.4 667.4L1291.2 667.3L1291.0 667.2L1290.8 667.1L1290.6 667.0L1290.3 666.9L1290.1 666.7L1289.8 666.6L1289.5 666.4L1289.2 666.2L1288.8 666.0L1288.4 665.7L1288.0 665.4L1287.5 665.1L1287.1 664.8L1286.6 664.5L1286.1 664.1L1285.5 663.7L1284.9 663.3L1284.2 662.8L1283.5 662.4L1282.8 661.9L1281.9 661.3L1281.1 660.7L1280.1 660.1L1279.1 659.4L1278.0 658.7L1276.9 658.0L1275.7 657.2L1274.5 656.3L1273.2 655.4L1271.8 654.3L1270.3 653.2L1268.8 652.0L1267.2 650.6L1265.5 649.2L1263.7 647.6L1261.8 645.6L1259.7 643.3L1257.4 640.7L1255.0 637.8L1252.4 634.4L1249.7 630.6L1246.8 626.4L1243.8 621.7L1240.5 616.3L1237.1 610.2L1233.4 603.5L1229.6 596.0L1225.5 587.6L1221.1 578.4L1216.5 568.3L1211.7 557.3L1207.0 545.2L1202.2 531.9L1197.4 517.7L1192.6 502.4L1187.9 486.3L1183.2 469.0L1178.5 450.7L1174.0 431.8L1169.9 412.8L1166.2 393.4L1162.7 373.5L1159.7 353.6L1157.3 334.3L1155.5 315.4L1154.3 296.7L1153.6 278.7L1153.8 261.6L1154.7 245.3L1156.4 229.7L1158.8 215.1L1162.0 202.0L1166.1 190.3L1171.0 179.8L1176.5 170.8L1182.5 163.4L1189.1 157.8L1196.3 153.9L1203.8 151.3L1211.6 149.8L1219.5 149.5L1227.7 150.5L1236.0 152.4L1244.3 154.5L1252.6 157.1L1261.0 160.2L1269.3 163.7L1277.5 167.2L1285.5 170.8L1293.4 174.5L1301.2 178.4L1308.9 182.4L1316.5 186.5L1324.0 190.7L1331.5 195.0L1339.0 199.4L1346.4 204.0L1353.9 208.6L1361.3 213.4L1368.7 218.2L1376.1 223.1L1383.4 228.0L1390.7 233.1L1398.1 238.2L1405.4 243.3L1412.7 248.5L1420.0 253.7L1427.4 259.0L1434.7 264.3L1442.0 269.7L1449.4 275.1L1456.7 280.5L1464.0 285.9L1471.4 291.4L1478.7 296.8L1485.9 302.3L1493.2 307.7L1500.5 313.2L1507.8 318.7L1515.0 324.1L1522.2 329.5L1529.3 334.9L1536.4 340.3L1543.5 345.6L1550.5 350.9L1557.4 356.2L1564.3 361.4L1571.1 366.6L1577.8 371.7L1584.5 376.8L1591.1 381.8L1597.6 386.7L1604.0 391.6L1610.3 396.3L1616.5 401.0L1622.6 405.6L1628.5 410.1L1634.2 414.5L1639.9 418.8L1645.3 422.9L1650.5 426.8L1655.5 430.6L1660.3 434.3L1665.1 437.9L1669.6 441.3L1674.1 444.7L1678.4 448.0L1682.4 451.1L1686.3 454.0L1690.0 456.7L1693.5 459.4L1696.9 461.9L1700.1 464.3L1703.1 466.6L1705.9 468.8L1708.6 470.8L1711.2 472.8L1713.6 474.6L1715.8 476.3L1718.0 478.0L1720.0 479.5L1721.9 480.9L1723.7 482.3L1725.4 483.6L1727.1 484.8L1728.6 486.0L1730.0 487.1L1731.4 488.1L1732.8 489.2L1734.1 490.1L1735.3 491.1L1736.4 492.0L1737.5 492.8L1738.6 493.6L1739.6 494.4L1740.5 495.1L1741.4 495.7L1742.3 496.4L1743.1 497.0L1743.8 497.5L1744.5 498.0L1745.1 498.5L1745.7 499.0L1746.3 499.4L1746.8 499.8L1747.3 500.2L1747.7 500.5L1748.2 500.8L1748.6 501.1L1748.9 501.4L1749.3 501.7L1749.6 501.9L1749.8 502.1L1750.1 502.3L1750.3 502.4L1750.5 502.6L1750.7 502.7L1750.9 502.9L1751.0 503.0L1751.2 503.1L1751.4 503.3L1751.5 503.4L1751.6 503.5L1751.8 503.6L1751.9 503.7L1752.1 503.8L1752.2 503.9L1752.4 504.0L1752.5 504.1L1752.6 504.2L1752.7 504.3L1752.8 504.4L1752.9 504.5L1753.0 504.5L1753.1 504.6L1753.2 504.6L1753.2 504.7L1753.3 504.7L1753.3 504.7L1753.3 504.8L1753.4 504.8L1753.4 504.8L1753.4 504.8L1753.4 504.8ZM1675.7 464.4L1396.8 295.8L1273.7 633.0Z" fill-rule="evenodd" fill="#000" opacity="0.4"/></g>
<line x1="1150.3999999999999" y1="147" x2="1841.5" y2="147" stroke="#b0b0b0" stroke-width="1.4"/>
<line x1="1841" y1="147" x2="1841" y2="669.8" stroke="#b0b0b0" stroke-width="1.4"/>
<line x1="1150.6" y1="146.5" x2="1150.6" y2="676.8" stroke="#b4b4b4" stroke-width="1.8"/>
<line x1="1144.6" y1="669.8" x2="1841.6" y2="669.8" stroke="#b4b4b4" stroke-width="2"/>
<text x="1144" y="677.2" font-size="14.8" text-anchor="end" fill="#dadada">0</text>
<text x="1150.6" y="693.2" font-size="14.8" text-anchor="middle" fill="#dadada">0</text>
<line x1="1144.6" y1="609.25" x2="1150.6" y2="609.25" stroke="#b4b4b4" stroke-width="1.4"/>
<text x="1144" y="614.75" font-size="14.8" text-anchor="end" fill="#dadada">0,1</text>
<line x1="1232.6599999999999" y1="669.8" x2="1232.6599999999999" y2="676.8" stroke="#b4b4b4" stroke-width="1.4"/>
<text x="1232.6599999999999" y="693.2" font-size="14.8" text-anchor="middle" fill="#dadada">0,1</text>
<line x1="1144.6" y1="546.8000000000001" x2="1150.6" y2="546.8000000000001" stroke="#b4b4b4" stroke-width="1.4"/>
<text x="1144" y="552.3000000000001" font-size="14.8" text-anchor="end" fill="#dadada">0,2</text>
<line x1="1314.7199999999998" y1="669.8" x2="1314.7199999999998" y2="676.8" stroke="#b4b4b4" stroke-width="1.4"/>
<text x="1314.7199999999998" y="693.2" font-size="14.8" text-anchor="middle" fill="#dadada">0,2</text>
<line x1="1144.6" y1="484.35" x2="1150.6" y2="484.35" stroke="#b4b4b4" stroke-width="1.4"/>
<text x="1144" y="489.85" font-size="14.8" text-anchor="end" fill="#dadada">0,3</text>
<line x1="1396.78" y1="669.8" x2="1396.78" y2="676.8" stroke="#b4b4b4" stroke-width="1.4"/>
<text x="1396.78" y="693.2" font-size="14.8" text-anchor="middle" fill="#dadada">0,3</text>
<line x1="1144.6" y1="421.90000000000003" x2="1150.6" y2="421.90000000000003" stroke="#b4b4b4" stroke-width="1.4"/>
<text x="1144" y="427.40000000000003" font-size="14.8" text-anchor="end" fill="#dadada">0,4</text>
<line x1="1478.84" y1="669.8" x2="1478.84" y2="676.8" stroke="#b4b4b4" stroke-width="1.4"/>
<text x="1478.84" y="693.2" font-size="14.8" text-anchor="middle" fill="#dadada">0,4</text>
<line x1="1144.6" y1="359.45000000000005" x2="1150.6" y2="359.45000000000005" stroke="#b4b4b4" stroke-width="1.4"/>
<text x="1144" y="364.95000000000005" font-size="14.8" text-anchor="end" fill="#dadada">0,5</text>
<line x1="1560.8999999999999" y1="669.8" x2="1560.8999999999999" y2="676.8" stroke="#b4b4b4" stroke-width="1.4"/>
<text x="1560.8999999999999" y="693.2" font-size="14.8" text-anchor="middle" fill="#dadada">0,5</text>
<line x1="1144.6" y1="297.00000000000006" x2="1150.6" y2="297.00000000000006" stroke="#b4b4b4" stroke-width="1.4"/>
<text x="1144" y="302.50000000000006" font-size="14.8" text-anchor="end" fill="#dadada">0,6</text>
<line x1="1642.96" y1="669.8" x2="1642.96" y2="676.8" stroke="#b4b4b4" stroke-width="1.4"/>
<text x="1642.96" y="693.2" font-size="14.8" text-anchor="middle" fill="#dadada">0,6</text>
<line x1="1144.6" y1="234.55000000000007" x2="1150.6" y2="234.55000000000007" stroke="#b4b4b4" stroke-width="1.4"/>
<text x="1144" y="240.05000000000007" font-size="14.8" text-anchor="end" fill="#dadada">0,7</text>
<line x1="1725.02" y1="669.8" x2="1725.02" y2="676.8" stroke="#b4b4b4" stroke-width="1.4"/>
<text x="1725.02" y="693.2" font-size="14.8" text-anchor="middle" fill="#dadada">0,7</text>
<line x1="1144.6" y1="172.10000000000002" x2="1150.6" y2="172.10000000000002" stroke="#b4b4b4" stroke-width="1.4"/>
<text x="1144" y="177.60000000000002" font-size="14.8" text-anchor="end" fill="#dadada">0,8</text>
<line x1="1807.08" y1="669.8" x2="1807.08" y2="676.8" stroke="#b4b4b4" stroke-width="1.4"/>
<text x="1807.08" y="693.2" font-size="14.8" text-anchor="middle" fill="#dadada">0,8</text>
<g clip-path="url(#ic)"><g filter="url(#vb)"><rect x="1585" y="146.20" width="265.20000000000005" height="8.5" fill="url(#ci0)"/><rect x="1585" y="154.20" width="265.20000000000005" height="8.5" fill="url(#ci1)"/><rect x="1585" y="162.20" width="265.20000000000005" height="8.5" fill="url(#ci2)"/><rect x="1585" y="170.20" width="265.20000000000005" height="8.5" fill="url(#ci3)"/><rect x="1585" y="178.20" width="265.20000000000005" height="8.5" fill="url(#ci4)"/><rect x="1585" y="186.20" width="265.20000000000005" height="8.5" fill="url(#ci5)"/><rect x="1585" y="194.20" width="265.20000000000005" height="8.5" fill="url(#ci6)"/><rect x="1585" y="202.20" width="265.20000000000005" height="8.5" fill="url(#ci7)"/><rect x="1585" y="210.20" width="265.20000000000005" height="8.5" fill="url(#ci8)"/><rect x="1585" y="218.20" width="265.20000000000005" height="8.5" fill="url(#ci9)"/><rect x="1585" y="226.20" width="265.20000000000005" height="8.5" fill="url(#ci10)"/><rect x="1585" y="234.20" width="265.20000000000005" height="8.5" fill="url(#ci11)"/><rect x="1585" y="242.20" width="265.20000000000005" height="8.5" fill="url(#ci12)"/><rect x="1585" y="250.20" width="265.20000000000005" height="8.5" fill="url(#ci13)"/><rect x="1585" y="258.20" width="265.20000000000005" height="8.5" fill="url(#ci14)"/><rect x="1585" y="266.20" width="265.20000000000005" height="8.5" fill="url(#ci15)"/><rect x="1585" y="274.20" width="265.20000000000005" height="8.5" fill="url(#ci16)"/><rect x="1585" y="282.20" width="265.20000000000005" height="8.5" fill="url(#ci17)"/><rect x="1585" y="290.20" width="265.20000000000005" height="8.5" fill="url(#ci18)"/><rect x="1585" y="298.20" width="265.20000000000005" height="8.5" fill="url(#ci19)"/><rect x="1585" y="306.20" width="265.20000000000005" height="8.5" fill="url(#ci20)"/><rect x="1585" y="314.20" width="265.20000000000005" height="8.5" fill="url(#ci21)"/><rect x="1585" y="322.20" width="265.20000000000005" height="8.5" fill="url(#ci22)"/><rect x="1585" y="330.20" width="265.20000000000005" height="8.5" fill="url(#ci23)"/><rect x="1585" y="338.20" width="265.20000000000005" height="8.5" fill="url(#ci24)"/><rect x="1585" y="346.20" width="265.20000000000005" height="8.5" fill="url(#ci25)"/><rect x="1585" y="354.20" width="265.20000000000005" height="8.5" fill="url(#ci26)"/></g><path d="M1601 154.2H1834.2V329.6L1601 174.8Z" fill="#000" opacity="0.4"/></g>
<rect x="1600.5" y="153.7" width="234.20000000000005" height="197.3" fill="none" stroke="#1c1c1c" stroke-width="2.4"/>
<rect x="1601" y="154.2" width="233.20000000000005" height="196.3" fill="none" stroke="#a4a494" stroke-width="1.2"/>
<rect x="1397.8" y="423.2" width="13.6" height="13.6" fill="none" stroke="#f6f6f6" stroke-width="1.75"/>
<rect x="1396.5" y="390.2" width="13.6" height="13.6" fill="none" stroke="#f6f6f6" stroke-width="1.75"/>
<rect x="1394.0" y="358.9" width="13.6" height="13.6" fill="none" stroke="#f6f6f6" stroke-width="1.75"/>
<rect x="1392.2" y="325.2" width="13.6" height="13.6" fill="none" stroke="#f6f6f6" stroke-width="1.75"/>
<rect x="1389.2" y="289.0" width="13.6" height="13.6" fill="none" stroke="#f6f6f6" stroke-width="1.75"/>
<rect x="1385.8" y="458.2" width="13.6" height="13.6" fill="none" stroke="#f6f6f6" stroke-width="1.75"/>
<rect x="1371.4" y="458.2" width="13.6" height="13.6" fill="none" stroke="#f6f6f6" stroke-width="1.75"/>
<rect x="1357.0" y="458.2" width="13.6" height="13.6" fill="none" stroke="#f6f6f6" stroke-width="1.75"/>
<rect x="1342.6" y="458.2" width="13.6" height="13.6" fill="none" stroke="#f6f6f6" stroke-width="1.75"/>
<rect x="1328.2" y="458.2" width="13.6" height="13.6" fill="none" stroke="#f6f6f6" stroke-width="1.75"/>
<rect x="1453.5" y="457.0" width="13.6" height="13.6" fill="none" stroke="#f6f6f6" stroke-width="1.75"/>
<rect x="1508.4" y="457.0" width="13.6" height="13.6" fill="none" stroke="#f6f6f6" stroke-width="1.75"/>
<rect x="1557.2" y="457.0" width="13.6" height="13.6" fill="none" stroke="#f6f6f6" stroke-width="1.75"/>
<rect x="1609.4" y="457.0" width="13.6" height="13.6" fill="none" stroke="#f6f6f6" stroke-width="1.75"/>
<rect x="1668.9" y="457.0" width="13.6" height="13.6" fill="none" stroke="#f6f6f6" stroke-width="1.75"/>
<rect x="1402.2" y="480.1" width="13.6" height="13.6" fill="none" stroke="#f6f6f6" stroke-width="1.75"/>
<rect x="1403.5" y="503.2" width="13.6" height="13.6" fill="none" stroke="#f6f6f6" stroke-width="1.75"/>
<rect x="1403.6" y="522.0" width="13.6" height="13.6" fill="none" stroke="#f6f6f6" stroke-width="1.75"/>
<rect x="1405.2" y="544.1" width="13.6" height="13.6" fill="none" stroke="#f6f6f6" stroke-width="1.75"/>
<rect x="1406.6" y="567.1" width="13.6" height="13.6" fill="none" stroke="#f6f6f6" stroke-width="1.75"/>
<rect x="1373.2" y="492.1" width="13.6" height="13.6" fill="none" stroke="#f6f6f6" stroke-width="1.75"/>
<rect x="1347.0" y="525.2" width="13.6" height="13.6" fill="none" stroke="#f6f6f6" stroke-width="1.75"/>
<rect x="1321.1" y="556.8" width="13.6" height="13.6" fill="none" stroke="#f6f6f6" stroke-width="1.75"/>
<rect x="1295.2" y="588.4" width="13.6" height="13.6" fill="none" stroke="#f6f6f6" stroke-width="1.75"/>
<rect x="1266.2" y="625.2" width="13.6" height="13.6" fill="none" stroke="#f6f6f6" stroke-width="1.75"/>
<rect x="1418.2" y="435.9" width="13.6" height="13.6" fill="none" stroke="#f6f6f6" stroke-width="1.75"/>
<rect x="1436.2" y="413.1" width="13.6" height="13.6" fill="none" stroke="#f6f6f6" stroke-width="1.75"/>
<rect x="1453.4" y="391.5" width="13.6" height="13.6" fill="none" stroke="#f6f6f6" stroke-width="1.75"/>
<rect x="1469.5" y="371.3" width="13.6" height="13.6" fill="none" stroke="#f6f6f6" stroke-width="1.75"/>
<rect x="1487.8" y="348.1" width="13.6" height="13.6" fill="none" stroke="#f6f6f6" stroke-width="1.75"/>
<rect x="1400.5" y="458.5" width="13.6" height="13.6" fill="none" stroke="#0a0a0a" stroke-width="2.2"/>
<circle cx="1407.8" cy="434.6" r="4.25" fill="#98b492" stroke="#101010" stroke-width="1.35"/>
<circle cx="1406.0" cy="401.5" r="4.25" fill="#90b488" stroke="#101010" stroke-width="1.35"/>
<circle cx="1403.1" cy="368.1" r="4.25" fill="#7cb474" stroke="#101010" stroke-width="1.35"/>
<circle cx="1401.9" cy="335.0" r="4.25" fill="#68b45e" stroke="#101010" stroke-width="1.35"/>
<circle cx="1399.0" cy="300.0" r="4.25" fill="#22aa14" stroke="#101010" stroke-width="1.35"/>
<circle cx="1394.4" cy="469.4" r="4.25" fill="#a2bab0" stroke="#101010" stroke-width="1.35"/>
<circle cx="1380.0" cy="469.4" r="4.25" fill="#98bab2" stroke="#101010" stroke-width="1.35"/>
<circle cx="1365.6" cy="469.4" r="4.25" fill="#8cbab4" stroke="#101010" stroke-width="1.35"/>
<circle cx="1351.2" cy="469.4" r="4.25" fill="#70bab4" stroke="#101010" stroke-width="1.35"/>
<circle cx="1336.5" cy="469.4" r="4.25" fill="#22b4b4" stroke="#101010" stroke-width="1.35"/>
<circle cx="1464.4" cy="468.4" r="4.25" fill="#c48e8e" stroke="#101010" stroke-width="1.35"/>
<circle cx="1522.3" cy="468.1" r="4.25" fill="#c47070" stroke="#101010" stroke-width="1.35"/>
<circle cx="1572.7" cy="466.6" r="4.25" fill="#c05a5e" stroke="#101010" stroke-width="1.35"/>
<circle cx="1629.2" cy="466.6" r="4.25" fill="#be3e40" stroke="#101010" stroke-width="1.35"/>
<circle cx="1674.3" cy="463.6" r="4.25" fill="#d80c0c" stroke="#101010" stroke-width="1.35"/>
<circle cx="1411.9" cy="489.6" r="4.25" fill="#bea2ba" stroke="#101010" stroke-width="1.35"/>
<circle cx="1413.1" cy="512.9" r="4.25" fill="#be8eba" stroke="#101010" stroke-width="1.35"/>
<circle cx="1415.0" cy="531.6" r="4.25" fill="#be7ab6" stroke="#101010" stroke-width="1.35"/>
<circle cx="1416.2" cy="553.5" r="4.25" fill="#be62b2" stroke="#101010" stroke-width="1.35"/>
<circle cx="1417.9" cy="570.6" r="4.25" fill="#c010aa" stroke="#101010" stroke-width="1.35"/>
<circle cx="1382.8" cy="501.2" r="4.25" fill="#a4a4be" stroke="#101010" stroke-width="1.35"/>
<circle cx="1356.9" cy="534.8" r="4.25" fill="#9090c0" stroke="#101010" stroke-width="1.35"/>
<circle cx="1329.4" cy="566.4" r="4.25" fill="#7a7ac2" stroke="#101010" stroke-width="1.35"/>
<circle cx="1303.6" cy="599.0" r="4.25" fill="#6666c8" stroke="#101010" stroke-width="1.35"/>
<circle cx="1277.5" cy="629.0" r="4.25" fill="#1a1a9c" stroke="#101010" stroke-width="1.35"/>
<circle cx="1429.2" cy="446.5" r="4.25" fill="#bcbc9e" stroke="#101010" stroke-width="1.35"/>
<circle cx="1447.1" cy="424.4" r="4.25" fill="#bcbc86" stroke="#101010" stroke-width="1.35"/>
<circle cx="1465.3" cy="402.2" r="4.25" fill="#baba6e" stroke="#101010" stroke-width="1.35"/>
<circle cx="1481.8" cy="382.0" r="4.25" fill="#b8b852" stroke="#101010" stroke-width="1.35"/>
<circle cx="1500.0" cy="359.9" r="4.25" fill="#b0b014" stroke="#101010" stroke-width="1.35"/>
<circle cx="1410.0" cy="468.0" r="4.25" fill="#fff" stroke="#101010" stroke-width="1.35"/>
<rect x="1709.5" y="244.3" width="13.6" height="13.6" fill="none" stroke="#f6f6f6" stroke-width="1.75"/>
<circle cx="1746.4" cy="281.9" r="4.25" fill="#b0b014" stroke="#101010" stroke-width="1.35"/>
<text x="91.5" y="770" font-size="30.6" textLength="232.5" lengthAdjust="spacingAndGlyphs" fill="#f4f4f4" stroke="#333" stroke-width="0.3">Current Reading</text>
<text x="91.5" y="815.6" font-size="26.3" textLength="109" lengthAdjust="spacingAndGlyphs" fill="#f4f4f4">x: 0,4258</text>
<text x="91.5" y="859.2" font-size="26.3" textLength="109" lengthAdjust="spacingAndGlyphs" fill="#f4f4f4">y: 0,4974</text>
<text x="91.5" y="901.8" font-size="26.3" textLength="102.5" lengthAdjust="spacingAndGlyphs" fill="#f4f4f4">fL: 52,04</text>
<text x="91.5" y="945.6" font-size="26.3" textLength="169.5" lengthAdjust="spacingAndGlyphs" fill="#f4f4f4">cd/m²: 178,29</text>
<text x="573.2" y="743.6" font-size="15.2" text-anchor="middle" textLength="88" lengthAdjust="spacingAndGlyphs" fill="#dadada">RGB Balance</text>
<rect x="455.7" y="749.4" width="266.7" height="190.80000000000007" fill="#242424"/>
<line x1="449.7" y1="770.5" x2="722.4" y2="770.5" stroke="#a6a6a6" stroke-width="1.2"/>
<text x="448.8" y="775.8" font-size="14.8" text-anchor="end" fill="#dadada">104</text>
<line x1="449.7" y1="808.5" x2="722.4" y2="808.5" stroke="#a6a6a6" stroke-width="1.2"/>
<text x="448.8" y="813.8" font-size="14.8" text-anchor="end" fill="#dadada">102</text>
<line x1="449.7" y1="846.5" x2="722.4" y2="846.5" stroke="#a6a6a6" stroke-width="1.2"/>
<text x="448.8" y="851.8" font-size="14.8" text-anchor="end" fill="#dadada">100</text>
<line x1="449.7" y1="885.5" x2="722.4" y2="885.5" stroke="#a6a6a6" stroke-width="1.2"/>
<text x="448.8" y="890.8" font-size="14.8" text-anchor="end" fill="#dadada">98</text>
<line x1="449.7" y1="923.5" x2="722.4" y2="923.5" stroke="#a6a6a6" stroke-width="1.2"/>
<text x="448.8" y="928.8" font-size="14.8" text-anchor="end" fill="#dadada">96</text>
<line x1="455.7" y1="749.4" x2="722.9" y2="749.4" stroke="#b0b0b0" stroke-width="1.6"/>
<line x1="722.4" y1="749.4" x2="722.4" y2="946.7" stroke="#b0b0b0" stroke-width="1.4"/>
<line x1="455.7" y1="748.9" x2="455.7" y2="946.7" stroke="#b4b4b4" stroke-width="1.8"/>
<rect x="483" y="800" width="68.20000000000005" height="140.20000000000005" fill="url(#rr)" stroke="#000" stroke-width="1.4"/>
<rect x="553.8" y="859.6" width="68.40000000000009" height="80.60000000000002" fill="url(#rg)" stroke="#000" stroke-width="1.4"/>
<rect x="624.4" y="789.8" width="69.60000000000002" height="150.4000000000001" fill="url(#rbl)" stroke="#000" stroke-width="1.4"/>
<line x1="455.2" y1="940.2" x2="722.9" y2="940.2" stroke="#b4b4b4" stroke-width="2"/>
<text x="589.3" y="958.4" font-size="14.8" text-anchor="middle" fill="#dadada">100%</text>
<rect x="743.0" y="723.0" width="777.5" height="217.29999999999995" fill="#1a1a1a"/>
<rect x="744.5" y="724.5" width="774.5" height="32.3" fill="url(#th)"/>
<rect x="744.5" y="756.8" width="774.5" height="30.300000000000068" fill="#3e3e3e"/>
<text x="765" y="779.0" font-size="17" textLength="91" lengthAdjust="spacingAndGlyphs" font-weight="bold" fill="#f6f6f6">x: CIE31</text>
<text x="959.0" y="779.0" font-size="17" textLength="73" lengthAdjust="spacingAndGlyphs" fill="#f6f6f6">0,3396</text>
<text x="1072.3" y="779.0" font-size="17" textLength="73" lengthAdjust="spacingAndGlyphs" fill="#f6f6f6">0,3614</text>
<text x="1185.6" y="779.0" font-size="17" textLength="73" lengthAdjust="spacingAndGlyphs" fill="#f6f6f6">0,3836</text>
<text x="1298.9" y="779.0" font-size="17" textLength="73" lengthAdjust="spacingAndGlyphs" fill="#f6f6f6">0,4037</text>
<text x="1412.2" y="779.0" font-size="17" textLength="73" lengthAdjust="spacingAndGlyphs" fill="#f6f6f6">0,4258</text>
<rect x="744.5" y="787.1" width="774.5" height="30.399999999999977" fill="#808080"/>
<text x="765" y="809.3000000000001" font-size="17" textLength="91" lengthAdjust="spacingAndGlyphs" font-weight="bold" fill="#e4e4e4">y: CIE31</text>
<text x="959.0" y="809.3000000000001" font-size="17" textLength="73" lengthAdjust="spacingAndGlyphs" fill="#e4e4e4">0,3587</text>
<text x="1072.3" y="809.3000000000001" font-size="17" textLength="73" lengthAdjust="spacingAndGlyphs" fill="#e4e4e4">0,3940</text>
<text x="1185.6" y="809.3000000000001" font-size="17" textLength="73" lengthAdjust="spacingAndGlyphs" fill="#e4e4e4">0,4296</text>
<text x="1298.9" y="809.3000000000001" font-size="17" textLength="73" lengthAdjust="spacingAndGlyphs" fill="#e4e4e4">0,4620</text>
<text x="1412.2" y="809.3000000000001" font-size="17" textLength="73" lengthAdjust="spacingAndGlyphs" fill="#e4e4e4">0,4974</text>
<rect x="744.5" y="817.5" width="774.5" height="30.399999999999977" fill="#3e3e3e"/>
<text x="765" y="839.7" font-size="17" textLength="13.5" lengthAdjust="spacingAndGlyphs" font-weight="bold" fill="#f6f6f6">Y</text>
<text x="959.0" y="839.7" font-size="17" textLength="98" lengthAdjust="spacingAndGlyphs" fill="#f6f6f6">188,0175</text>
<text x="1072.3" y="839.7" font-size="17" textLength="98" lengthAdjust="spacingAndGlyphs" fill="#f6f6f6">184,8392</text>
<text x="1185.6" y="839.7" font-size="17" textLength="98" lengthAdjust="spacingAndGlyphs" fill="#f6f6f6">182,2669</text>
<text x="1298.9" y="839.7" font-size="17" textLength="98" lengthAdjust="spacingAndGlyphs" fill="#f6f6f6">180,2061</text>
<text x="1412.2" y="839.7" font-size="17" textLength="98" lengthAdjust="spacingAndGlyphs" fill="#f6f6f6">178,2941</text>
<rect x="744.5" y="847.9" width="774.5" height="30.100000000000023" fill="#808080"/>
<text x="765" y="870.1" font-size="17" textLength="166" lengthAdjust="spacingAndGlyphs" font-weight="bold" fill="#e4e4e4">Target x:CIE31</text>
<text x="959.0" y="870.1" font-size="17" textLength="73" lengthAdjust="spacingAndGlyphs" fill="#e4e4e4">0,3344</text>
<text x="1072.3" y="870.1" font-size="17" textLength="73" lengthAdjust="spacingAndGlyphs" fill="#e4e4e4">0,3564</text>
<text x="1185.6" y="870.1" font-size="17" textLength="73" lengthAdjust="spacingAndGlyphs" fill="#e4e4e4">0,3773</text>
<text x="1298.9" y="870.1" font-size="17" textLength="73" lengthAdjust="spacingAndGlyphs" fill="#e4e4e4">0,3969</text>
<text x="1412.2" y="870.1" font-size="17" textLength="73" lengthAdjust="spacingAndGlyphs" fill="#e4e4e4">0,4193</text>
<rect x="744.5" y="878" width="774.5" height="30.299999999999955" fill="#3e3e3e"/>
<text x="765" y="900.2" font-size="17" textLength="166" lengthAdjust="spacingAndGlyphs" font-weight="bold" fill="#f6f6f6">Target y:CIE31</text>
<text x="959.0" y="900.2" font-size="17" textLength="73" lengthAdjust="spacingAndGlyphs" fill="#f6f6f6">0,3648</text>
<text x="1072.3" y="900.2" font-size="17" textLength="73" lengthAdjust="spacingAndGlyphs" fill="#f6f6f6">0,4013</text>
<text x="1185.6" y="900.2" font-size="17" textLength="73" lengthAdjust="spacingAndGlyphs" fill="#f6f6f6">0,4358</text>
<text x="1298.9" y="900.2" font-size="17" textLength="73" lengthAdjust="spacingAndGlyphs" fill="#f6f6f6">0,4682</text>
<text x="1412.2" y="900.2" font-size="17" textLength="73" lengthAdjust="spacingAndGlyphs" fill="#f6f6f6">0,5053</text>
<rect x="744.5" y="908.3" width="774.5" height="30.5" fill="#808080"/>
<text x="765" y="930.5" font-size="17" textLength="96" lengthAdjust="spacingAndGlyphs" font-weight="bold" fill="#e4e4e4">Target Y</text>
<text x="959.0" y="930.5" font-size="17" textLength="98" lengthAdjust="spacingAndGlyphs" fill="#e4e4e4">187,7549</text>
<text x="1072.3" y="930.5" font-size="17" textLength="98" lengthAdjust="spacingAndGlyphs" fill="#e4e4e4">184,4592</text>
<text x="1185.6" y="930.5" font-size="17" textLength="98" lengthAdjust="spacingAndGlyphs" fill="#e4e4e4">181,9270</text>
<text x="1298.9" y="930.5" font-size="17" textLength="98" lengthAdjust="spacingAndGlyphs" fill="#e4e4e4">179,9397</text>
<text x="1412.2" y="930.5" font-size="17" textLength="98" lengthAdjust="spacingAndGlyphs" fill="#e4e4e4">178,0184</text>
<text x="1008.8" y="747.8" font-size="16.2" text-anchor="middle" textLength="42" lengthAdjust="spacingAndGlyphs" font-weight="bold" fill="#fff">20%</text>
<text x="1122.1" y="747.8" font-size="16.2" text-anchor="middle" textLength="42" lengthAdjust="spacingAndGlyphs" font-weight="bold" fill="#fff">40%</text>
<text x="1235.3999999999999" y="747.8" font-size="16.2" text-anchor="middle" textLength="42" lengthAdjust="spacingAndGlyphs" font-weight="bold" fill="#fff">60%</text>
<text x="1348.6999999999998" y="747.8" font-size="16.2" text-anchor="middle" textLength="42" lengthAdjust="spacingAndGlyphs" font-weight="bold" fill="#fff">80%</text>
<text x="1462.0" y="747.8" font-size="16.2" text-anchor="middle" textLength="54" lengthAdjust="spacingAndGlyphs" font-weight="bold" fill="#fff">100%</text>
<rect x="0" y="966.5" width="1920" height="72.5" fill="url(#bbg)"/>
<rect x="1480" y="968" width="83" height="71" fill="url(#bsh)"/>
<rect x="1875" y="968" width="45" height="36" fill="#1e1e1e"/>
<rect x="52" y="969" width="7" height="70" fill="#3a3a3a"/>
<rect x="0" y="100" width="1.2" height="867" fill="#262626"/>
<path d="M1.5 1034.5V973Q1.5 969 5.5 969H47.8Q51.8 969 51.8 973V1034.5Q51.8 1037.5 48.8 1037.5H4.5Q1.5 1037.5 1.5 1034.5Z" fill="url(#bt)"/>
<circle cx="27" cy="980.2" r="8.6" fill="url(#icc)"/>
<path d="M21.8 981.9h10.4l-5.2-5.5z" fill="#1c1c1c"/>
<rect x="7" y="998.3" width="39.5" height="33.8" rx="3.5" fill="#ffff12" stroke="#b8b800" stroke-width="1"/>
<path d="M59.1 1034.5V973Q59.1 969 63.1 969H224.29999999999998Q228.29999999999998 969 228.29999999999998 973V1034.5Q228.29999999999998 1037.5 225.29999999999998 1037.5H62.1Q59.1 1037.5 59.1 1034.5Z" fill="url(#bt)"/>
<rect x="65.1" y="975.5" width="157.2" height="40" rx="4" fill="#c0c2a4" stroke="#6e6e3a" stroke-width="1" stroke-opacity="0.7"/>
<text x="143.7" y="1032.8" font-size="10.6" text-anchor="middle" textLength="22.5" lengthAdjust="spacingAndGlyphs" font-weight="bold" fill="#2a2a2a">20%</text>
<path d="M230.7 1034.5V973Q230.7 969 234.7 969H395.9Q399.9 969 399.9 973V1034.5Q399.9 1037.5 396.9 1037.5H233.7Q230.7 1037.5 230.7 1034.5Z" fill="url(#bt)"/>
<rect x="236.7" y="975.5" width="157.2" height="40" rx="4" fill="#c1c288" stroke="#6e6e3a" stroke-width="1" stroke-opacity="0.7"/>
<text x="315.29999999999995" y="1032.8" font-size="10.6" text-anchor="middle" textLength="22.5" lengthAdjust="spacingAndGlyphs" font-weight="bold" fill="#2a2a2a">40%</text>
<path d="M402.3 1034.5V973Q402.3 969 406.3 969H567.5Q571.5 969 571.5 973V1034.5Q571.5 1037.5 568.5 1037.5H405.3Q402.3 1037.5 402.3 1034.5Z" fill="url(#bt)"/>
<rect x="408.3" y="975.5" width="157.2" height="40" rx="4" fill="#c2c16c" stroke="#6e6e3a" stroke-width="1" stroke-opacity="0.7"/>
<text x="486.9" y="1032.8" font-size="10.6" text-anchor="middle" textLength="22.5" lengthAdjust="spacingAndGlyphs" font-weight="bold" fill="#2a2a2a">60%</text>
<path d="M573.9 1034.5V973Q573.9 969 577.9 969H739.0999999999999Q743.0999999999999 969 743.0999999999999 973V1034.5Q743.0999999999999 1037.5 740.0999999999999 1037.5H576.9Q573.9 1037.5 573.9 1034.5Z" fill="url(#bt)"/>
<rect x="579.9" y="975.5" width="157.2" height="40" rx="4" fill="#c3c14c" stroke="#6e6e3a" stroke-width="1" stroke-opacity="0.7"/>
<text x="658.5" y="1032.8" font-size="10.6" text-anchor="middle" textLength="22.5" lengthAdjust="spacingAndGlyphs" font-weight="bold" fill="#2a2a2a">80%</text>
<path d="M745.5 1034.5V973Q745.5 969 749.5 969H910.7Q914.7 969 914.7 973V1034.5Q914.7 1037.5 911.7 1037.5H748.5Q745.5 1037.5 745.5 1034.5Z" fill="#0c0c0c"/>
<rect x="751.5" y="975.5" width="157.2" height="40" rx="4" fill="#c8c400" stroke="#6e6e3a" stroke-width="1" stroke-opacity="0.7"/>
<text x="830.1" y="1032.8" font-size="10.6" text-anchor="middle" textLength="29" lengthAdjust="spacingAndGlyphs" font-weight="bold" fill="#fff">100%</text>
<path d="M1563.4 989.2V973Q1563.4 969 1567.4 969H1617.3V989.2Z" fill="url(#bt2)"/>
<circle cx="1590.6" cy="979.3" r="8.5" fill="url(#icc)"/>
<path d="M1585.2 981.6h10.8l-5.4-5.5z" fill="#1c1c1c"/>
<path d="M1563.4 990.7H1617.3V1037.3H1567.4Q1563.4 1037.3 1563.4 1033.3Z" fill="url(#bt3)"/>
<rect x="1574.5" y="997.8" width="31.8" height="31.8" rx="4.5" fill="url(#gl)" stroke="#1c1c1c" stroke-width="2.4"/>
<rect x="1582.9" y="1006.7" width="15.3" height="14.9" fill="url(#gk)"/>
<path d="M1618.8 1002.1V973Q1618.8 969 1622.8 969H1670.0V1002.1Z" fill="url(#bt2)"/>
<circle cx="1644.2" cy="986" r="10.8" fill="url(#icc)"/>
<rect x="1671.6" y="969" width="49.40000000000009" height="33.1" fill="url(#bt2)"/>
<circle cx="1695.7" cy="986" r="10.8" fill="url(#icc)"/>
<rect x="1722.6" y="969" width="49.00000000000023" height="33.1" fill="url(#bt2)"/>
<circle cx="1746.5" cy="986" r="10.8" fill="url(#icc)"/>
<rect x="1773.2" y="969" width="49.299999999999955" height="33.1" fill="url(#bt2)"/>
<circle cx="1797.2" cy="986" r="10.8" fill="url(#icc)"/>
<rect x="1824.1" y="969" width="49.200000000000045" height="33.1" fill="url(#bt2)"/>
<circle cx="1848.1" cy="986" r="10.8" fill="url(#icc)"/>
<rect x="1640.0" y="981.8" width="8.4" height="8.4" fill="#2c2c2c"/>
<path d="M1692.5 980.6v10.8l8-5.4z" fill="#2c2c2c"/>
<path d="M1743.1 981.3h-2.4v9.4h2.4M1749.9 981.3h2.4v9.4h-2.4" fill="none" stroke="#2c2c2c" stroke-width="1.6"/>
<path d="M1744.2 986h1.6M1747.2 986h1.6" stroke="#2c2c2c" stroke-width="1.6"/>
<path d="M1797.2 986c-1.8 -2.6 -3 -3.4 -4.4 -3.4a3.4 3.4 0 0 0 0 6.8c1.4 0 2.6 -0.8 4.4 -3.4c1.8 -2.6 3 -3.4 4.4 -3.4a3.4 3.4 0 0 1 0 6.8c-1.4 0 -2.6 -0.8 -4.4 -3.4z" fill="none" stroke="#2c2c2c" stroke-width="1.7"/>
<path d="M1842.7 985a5.6 5.6 0 0 1 9.6 -3" fill="none" stroke="#2c2c2c" stroke-width="2.2"/><path d="M1853.9 979.2v4.6h-4.6z" fill="#2c2c2c"/>
<path d="M1853.5 987a5.6 5.6 0 0 1 -9.6 3" fill="none" stroke="#2c2c2c" stroke-width="2.2"/><path d="M1842.3 992.8v-4.6h4.6z" fill="#2c2c2c"/>
<circle cx="1900.4" cy="986" r="11" fill="#343434"/>
<path d="M1618.8 1036.8V1008Q1618.8 1004 1622.8 1004H1771.8V1036.8Z" fill="url(#bn)"/>
<rect x="1773" y="1004" width="147" height="32.8" fill="url(#bn)"/>
<circle cx="1653.5" cy="1020.6" r="11" fill="url(#icc)"/>
<circle cx="1893.8" cy="1020.6" r="11" fill="url(#icc)"/>
<path d="M1652.6 1015.6l-4.2 5l4.2 5M1658 1015.6l-4.2 5l4.2 5" fill="none" stroke="#2c2c2c" stroke-width="1.7"/>
<path d="M1889.4 1015.6l4.2 5l-4.2 5M1894.8 1015.6l4.2 5l-4.2 5" fill="none" stroke="#2c2c2c" stroke-width="1.7"/>
<text x="1684.3" y="1029.8" font-size="23.2" textLength="56.5" lengthAdjust="spacingAndGlyphs" fill="#2e2e2e" stroke="#2e2e2e" stroke-width="0.6">Back</text>
<text x="1804.5" y="1029.8" font-size="23.2" textLength="58.5" lengthAdjust="spacingAndGlyphs" fill="#2e2e2e" stroke="#2e2e2e" stroke-width="0.6">Next</text>
</svg>
</body></html>
